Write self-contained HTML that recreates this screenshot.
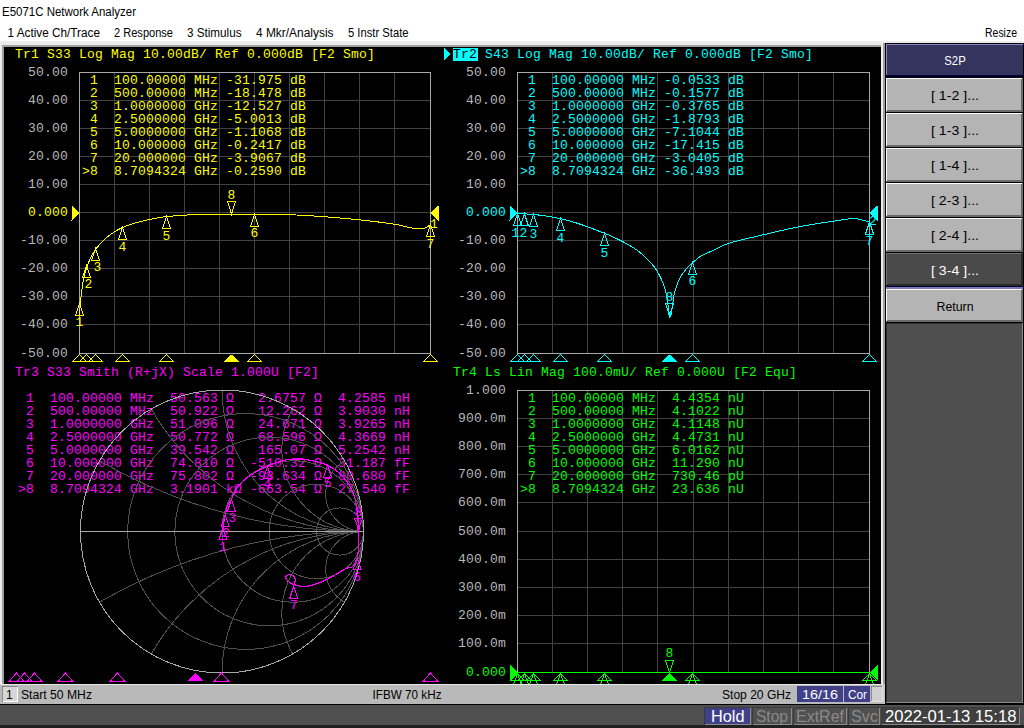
<!DOCTYPE html>
<html><head><meta charset="utf-8"><style>html,body{margin:0;padding:0;width:1024px;height:728px;overflow:hidden;background:#fff}</style></head>
<body>
<svg width="1024" height="728" viewBox="0 0 1024 728" style="position:absolute;left:0;top:0" shape-rendering="crispEdges">
<style>.m{font-family:'Liberation Mono', monospace;font-size:13.0px;letter-spacing:0.200px;white-space:pre}</style>
<rect x="0" y="0" width="1024" height="728" fill="#ffffff"/>
<text x="2" y="16" fill="#000" font-family="'Liberation Sans', sans-serif" font-size="12" textLength="134" lengthAdjust="spacingAndGlyphs" >E5071C Network Analyzer</text>
<text x="7.5" y="37" fill="#000" font-family="'Liberation Sans', sans-serif" font-size="12" textLength="92.5" lengthAdjust="spacingAndGlyphs" >1 Active Ch/Trace</text>
<text x="114" y="37" fill="#000" font-family="'Liberation Sans', sans-serif" font-size="12" textLength="59" lengthAdjust="spacingAndGlyphs" >2 Response</text>
<text x="187" y="37" fill="#000" font-family="'Liberation Sans', sans-serif" font-size="12" textLength="54.5" lengthAdjust="spacingAndGlyphs" >3 Stimulus</text>
<text x="256" y="37" fill="#000" font-family="'Liberation Sans', sans-serif" font-size="12" textLength="77.5" lengthAdjust="spacingAndGlyphs" >4 Mkr/Analysis</text>
<text x="348" y="37" fill="#000" font-family="'Liberation Sans', sans-serif" font-size="12" textLength="60.5" lengthAdjust="spacingAndGlyphs" >5 Instr State</text>
<text x="985" y="37" fill="#000" font-family="'Liberation Sans', sans-serif" font-size="12" textLength="32" lengthAdjust="spacingAndGlyphs" >Resize</text>
<rect x="0" y="41" width="1024" height="6" fill="#f0f0f0"/>
<rect x="0" y="41" width="885" height="644" fill="#ececec"/>
<rect x="2" y="45" width="881" height="640" fill="#a0a0a0"/>
<rect x="4" y="47" width="877" height="637" fill="#000000"/>
<rect x="114" y="72" width="1" height="282" fill="#424242"/>
<rect x="149" y="72" width="1" height="282" fill="#424242"/>
<rect x="184" y="72" width="1" height="282" fill="#424242"/>
<rect x="219" y="72" width="1" height="282" fill="#424242"/>
<rect x="254" y="72" width="1" height="282" fill="#424242"/>
<rect x="289" y="72" width="1" height="282" fill="#424242"/>
<rect x="324" y="72" width="1" height="282" fill="#424242"/>
<rect x="359" y="72" width="1" height="282" fill="#424242"/>
<rect x="394" y="72" width="1" height="282" fill="#424242"/>
<rect x="79" y="100" width="352" height="1" fill="#424242"/>
<rect x="79" y="128" width="352" height="1" fill="#424242"/>
<rect x="79" y="156" width="352" height="1" fill="#424242"/>
<rect x="79" y="184" width="352" height="1" fill="#424242"/>
<rect x="79" y="212" width="352" height="1" fill="#424242"/>
<rect x="79" y="240" width="352" height="1" fill="#424242"/>
<rect x="79" y="268" width="352" height="1" fill="#424242"/>
<rect x="79" y="296" width="352" height="1" fill="#424242"/>
<rect x="79" y="324" width="352" height="1" fill="#424242"/>
<rect x="79" y="72" width="352" height="1" fill="#a8a8a8"/>
<rect x="79" y="353" width="352" height="1" fill="#a8a8a8"/>
<rect x="79" y="72" width="1" height="282" fill="#a8a8a8"/>
<rect x="430" y="72" width="1" height="282" fill="#a8a8a8"/>
<rect x="552" y="72" width="1" height="282" fill="#424242"/>
<rect x="587" y="72" width="1" height="282" fill="#424242"/>
<rect x="622" y="72" width="1" height="282" fill="#424242"/>
<rect x="657" y="72" width="1" height="282" fill="#424242"/>
<rect x="693" y="72" width="1" height="282" fill="#424242"/>
<rect x="728" y="72" width="1" height="282" fill="#424242"/>
<rect x="763" y="72" width="1" height="282" fill="#424242"/>
<rect x="798" y="72" width="1" height="282" fill="#424242"/>
<rect x="833" y="72" width="1" height="282" fill="#424242"/>
<rect x="517" y="100" width="353" height="1" fill="#424242"/>
<rect x="517" y="128" width="353" height="1" fill="#424242"/>
<rect x="517" y="156" width="353" height="1" fill="#424242"/>
<rect x="517" y="184" width="353" height="1" fill="#424242"/>
<rect x="517" y="212" width="353" height="1" fill="#424242"/>
<rect x="517" y="240" width="353" height="1" fill="#424242"/>
<rect x="517" y="268" width="353" height="1" fill="#424242"/>
<rect x="517" y="296" width="353" height="1" fill="#424242"/>
<rect x="517" y="324" width="353" height="1" fill="#424242"/>
<rect x="517" y="72" width="353" height="1" fill="#a8a8a8"/>
<rect x="517" y="353" width="353" height="1" fill="#a8a8a8"/>
<rect x="517" y="72" width="1" height="282" fill="#a8a8a8"/>
<rect x="869" y="72" width="1" height="282" fill="#a8a8a8"/>
<rect x="552" y="390" width="1" height="283" fill="#424242"/>
<rect x="587" y="390" width="1" height="283" fill="#424242"/>
<rect x="622" y="390" width="1" height="283" fill="#424242"/>
<rect x="657" y="390" width="1" height="283" fill="#424242"/>
<rect x="693" y="390" width="1" height="283" fill="#424242"/>
<rect x="728" y="390" width="1" height="283" fill="#424242"/>
<rect x="763" y="390" width="1" height="283" fill="#424242"/>
<rect x="798" y="390" width="1" height="283" fill="#424242"/>
<rect x="833" y="390" width="1" height="283" fill="#424242"/>
<rect x="517" y="418" width="353" height="1" fill="#424242"/>
<rect x="517" y="446" width="353" height="1" fill="#424242"/>
<rect x="517" y="474" width="353" height="1" fill="#424242"/>
<rect x="517" y="502" width="353" height="1" fill="#424242"/>
<rect x="517" y="531" width="353" height="1" fill="#424242"/>
<rect x="517" y="559" width="353" height="1" fill="#424242"/>
<rect x="517" y="587" width="353" height="1" fill="#424242"/>
<rect x="517" y="615" width="353" height="1" fill="#424242"/>
<rect x="517" y="643" width="353" height="1" fill="#424242"/>
<rect x="517" y="390" width="353" height="1" fill="#a8a8a8"/>
<rect x="517" y="672" width="353" height="1" fill="#a8a8a8"/>
<rect x="517" y="390" width="1" height="283" fill="#a8a8a8"/>
<rect x="869" y="390" width="1" height="283" fill="#a8a8a8"/>
<text x="68" y="75.5" fill="#b8b8b8" class="m" text-anchor="end">50.00</text>
<text x="68" y="103.6" fill="#b8b8b8" class="m" text-anchor="end">40.00</text>
<text x="68" y="131.7" fill="#b8b8b8" class="m" text-anchor="end">30.00</text>
<text x="68" y="159.8" fill="#b8b8b8" class="m" text-anchor="end">20.00</text>
<text x="68" y="187.9" fill="#b8b8b8" class="m" text-anchor="end">10.00</text>
<text x="68" y="216.0" fill="#ffff00" class="m" text-anchor="end">0.000</text>
<text x="68" y="244.1" fill="#b8b8b8" class="m" text-anchor="end">-10.00</text>
<text x="68" y="272.2" fill="#b8b8b8" class="m" text-anchor="end">-20.00</text>
<text x="68" y="300.3" fill="#b8b8b8" class="m" text-anchor="end">-30.00</text>
<text x="68" y="328.4" fill="#b8b8b8" class="m" text-anchor="end">-40.00</text>
<text x="68" y="356.5" fill="#b8b8b8" class="m" text-anchor="end">-50.00</text>
<text x="506" y="75.5" fill="#b8b8b8" class="m" text-anchor="end">50.00</text>
<text x="506" y="103.6" fill="#b8b8b8" class="m" text-anchor="end">40.00</text>
<text x="506" y="131.7" fill="#b8b8b8" class="m" text-anchor="end">30.00</text>
<text x="506" y="159.8" fill="#b8b8b8" class="m" text-anchor="end">20.00</text>
<text x="506" y="187.9" fill="#b8b8b8" class="m" text-anchor="end">10.00</text>
<text x="506" y="216.0" fill="#00ffff" class="m" text-anchor="end">0.000</text>
<text x="506" y="244.1" fill="#b8b8b8" class="m" text-anchor="end">-10.00</text>
<text x="506" y="272.2" fill="#b8b8b8" class="m" text-anchor="end">-20.00</text>
<text x="506" y="300.3" fill="#b8b8b8" class="m" text-anchor="end">-30.00</text>
<text x="506" y="328.4" fill="#b8b8b8" class="m" text-anchor="end">-40.00</text>
<text x="506" y="356.5" fill="#b8b8b8" class="m" text-anchor="end">-50.00</text>
<text x="506" y="393.5" fill="#b8b8b8" class="m" text-anchor="end">1.000</text>
<text x="506" y="421.7" fill="#b8b8b8" class="m" text-anchor="end">900.0m</text>
<text x="506" y="449.9" fill="#b8b8b8" class="m" text-anchor="end">800.0m</text>
<text x="506" y="478.1" fill="#b8b8b8" class="m" text-anchor="end">700.0m</text>
<text x="506" y="506.3" fill="#b8b8b8" class="m" text-anchor="end">600.0m</text>
<text x="506" y="534.5" fill="#b8b8b8" class="m" text-anchor="end">500.0m</text>
<text x="506" y="562.7" fill="#b8b8b8" class="m" text-anchor="end">400.0m</text>
<text x="506" y="590.9" fill="#b8b8b8" class="m" text-anchor="end">300.0m</text>
<text x="506" y="619.1" fill="#b8b8b8" class="m" text-anchor="end">200.0m</text>
<text x="506" y="647.3" fill="#b8b8b8" class="m" text-anchor="end">100.0m</text>
<text x="506" y="675.5" fill="#00ff00" class="m" text-anchor="end">0.000</text>
<text x="15" y="58" fill="#ffff00" class="m" >Tr1 S33 Log Mag 10.00dB/ Ref 0.000dB [F2 Smo]</text>
<polygon points="444,48 450,54 444,60" fill="#00ffff"/>
<rect x="453" y="48" width="25" height="13" fill="#00ffff"/>
<text x="453" y="58" fill="#000" class="m" >Tr2</text>
<text x="485" y="58" fill="#00ffff" class="m" >S43 Log Mag 10.00dB/ Ref 0.000dB [F2 Smo]</text>
<text x="15" y="376" fill="#ff00ff" class="m" >Tr3 S33 Smith (R+jX) Scale 1.000U [F2]</text>
<text x="453" y="376" fill="#00ff00" class="m" >Tr4 Ls Lin Mag 100.0mU/ Ref 0.000U [F2 Equ]</text>
<text x="82" y="84" fill="#ffff00" class="m" > 1  100.00000 MHz -31.975 dB</text>
<text x="520" y="84" fill="#00ffff" class="m" > 1  100.00000 MHz -0.0533 dB</text>
<text x="18" y="402" fill="#ff00ff" class="m" > 1  100.00000 MHz  50.563 Ω   2.6757 Ω  4.2585 nH</text>
<text x="520" y="402" fill="#00ff00" class="m" > 1  100.00000 MHz  4.4354 nU</text>
<text x="82" y="97" fill="#ffff00" class="m" > 2  500.00000 MHz -18.478 dB</text>
<text x="520" y="97" fill="#00ffff" class="m" > 2  500.00000 MHz -0.1577 dB</text>
<text x="18" y="415" fill="#ff00ff" class="m" > 2  500.00000 MHz  50.922 Ω   12.262 Ω  3.9030 nH</text>
<text x="520" y="415" fill="#00ff00" class="m" > 2  500.00000 MHz  4.1022 nU</text>
<text x="82" y="110" fill="#ffff00" class="m" > 3  1.0000000 GHz -12.527 dB</text>
<text x="520" y="110" fill="#00ffff" class="m" > 3  1.0000000 GHz -0.3765 dB</text>
<text x="18" y="428" fill="#ff00ff" class="m" > 3  1.0000000 GHz  51.096 Ω   24.671 Ω  3.9265 nH</text>
<text x="520" y="428" fill="#00ff00" class="m" > 3  1.0000000 GHz  4.1148 nU</text>
<text x="82" y="123" fill="#ffff00" class="m" > 4  2.5000000 GHz -5.0013 dB</text>
<text x="520" y="123" fill="#00ffff" class="m" > 4  2.5000000 GHz -1.8793 dB</text>
<text x="18" y="441" fill="#ff00ff" class="m" > 4  2.5000000 GHz  50.772 Ω   68.596 Ω  4.3669 nH</text>
<text x="520" y="441" fill="#00ff00" class="m" > 4  2.5000000 GHz  4.4731 nU</text>
<text x="82" y="136" fill="#ffff00" class="m" > 5  5.0000000 GHz -1.1068 dB</text>
<text x="520" y="136" fill="#00ffff" class="m" > 5  5.0000000 GHz -7.1044 dB</text>
<text x="18" y="454" fill="#ff00ff" class="m" > 5  5.0000000 GHz  39.542 Ω   165.07 Ω  5.2542 nH</text>
<text x="520" y="454" fill="#00ff00" class="m" > 5  5.0000000 GHz  6.0162 nU</text>
<text x="82" y="149" fill="#ffff00" class="m" > 6  10.000000 GHz -0.2417 dB</text>
<text x="520" y="149" fill="#00ffff" class="m" > 6  10.000000 GHz -17.415 dB</text>
<text x="18" y="467" fill="#ff00ff" class="m" > 6  10.000000 GHz  74.810 Ω  -510.32 Ω  31.187 fF</text>
<text x="520" y="467" fill="#00ff00" class="m" > 6  10.000000 GHz  11.290 nU</text>
<text x="82" y="162" fill="#ffff00" class="m" > 7  20.000000 GHz -3.9067 dB</text>
<text x="520" y="162" fill="#00ffff" class="m" > 7  20.000000 GHz -3.0405 dB</text>
<text x="18" y="480" fill="#ff00ff" class="m" > 7  20.000000 GHz  75.802 Ω  -98.634 Ω  80.680 fF</text>
<text x="520" y="480" fill="#00ff00" class="m" > 7  20.000000 GHz  730.46 pU</text>
<text x="82" y="175" fill="#ffff00" class="m" >&gt;8  8.7094324 GHz -0.2590 dB</text>
<text x="520" y="175" fill="#00ffff" class="m" >&gt;8  8.7094324 GHz -36.493 dB</text>
<text x="18" y="493" fill="#ff00ff" class="m" >&gt;8  8.7094324 GHz  3.1901 kΩ -663.54 Ω  27.540 fF</text>
<text x="520" y="493" fill="#00ff00" class="m" >&gt;8  8.7094324 GHz  23.636 nU</text>
<path d="M79.50,316.06 L79.72,312.54 L79.94,309.14 L80.16,306.03 L80.38,303.37 L80.60,301.06 L80.82,298.86 L81.04,296.76 L81.25,294.77 L81.47,292.88 L81.69,291.09 L81.91,289.41 L82.13,287.82 L82.35,286.32 L82.57,284.92 L82.79,283.61 L83.01,282.39 L83.23,281.24 L83.45,280.12 L83.67,279.04 L83.89,278.00 L84.11,276.99 L84.33,276.02 L84.55,275.08 L84.77,274.17 L84.98,273.30 L85.20,272.45 L85.42,271.64 L85.64,270.85 L85.86,270.09 L86.08,269.36 L86.30,268.66 L86.52,267.97 L86.74,267.32 L86.96,266.68 L87.18,266.07 L87.40,265.48 L87.62,264.90 L87.84,264.33 L88.06,263.78 L88.28,263.23 L88.49,262.70 L88.71,262.17 L88.93,261.65 L89.15,261.15 L89.37,260.65 L89.59,260.16 L89.81,259.68 L90.03,259.20 L90.25,258.74 L90.47,258.28 L90.69,257.83 L90.91,257.39 L91.13,256.96 L91.35,256.54 L91.57,256.12 L91.78,255.71 L92.00,255.30 L92.22,254.91 L92.44,254.52 L92.66,254.14 L92.88,253.76 L93.10,253.39 L93.32,253.02 L93.54,252.66 L93.76,252.31 L93.98,251.96 L94.20,251.62 L94.42,251.28 L94.64,250.95 L94.86,250.63 L95.08,250.30 L95.30,249.99 L95.51,249.67 L95.73,249.36 L95.95,249.06 L96.17,248.76 L96.39,248.46 L96.61,248.17 L96.83,247.87 L97.05,247.59 L97.27,247.30 L97.49,247.02 L97.71,246.74 L97.93,246.46 L98.15,246.19 L98.37,245.91 L98.59,245.64 L98.80,245.38 L99.02,245.12 L99.24,244.85 L99.46,244.60 L99.68,244.34 L99.90,244.09 L100.12,243.84 L100.34,243.59 L100.56,243.35 L100.78,243.10 L101.00,242.86 L101.22,242.63 L101.44,242.39 L101.66,242.16 L101.88,241.93 L102.10,241.70 L102.31,241.48 L102.53,241.25 L102.75,241.03 L102.97,240.82 L103.19,240.60 L103.41,240.39 L103.63,240.17 L103.85,239.97 L104.07,239.76 L104.29,239.55 L104.51,239.35 L104.73,239.15 L104.95,238.95 L105.17,238.75 L105.39,238.56 L105.61,238.37 L105.82,238.18 L106.04,237.99 L106.26,237.80 L106.48,237.62 L106.70,237.43 L106.92,237.25 L107.14,237.07 L107.36,236.90 L107.58,236.72 L107.80,236.55 L108.02,236.37 L108.24,236.20 L108.46,236.04 L108.68,235.87 L108.90,235.70 L109.12,235.54 L109.33,235.37 L109.55,235.21 L109.77,235.05 L109.99,234.89 L110.21,234.73 L110.43,234.57 L110.65,234.41 L110.87,234.26 L111.09,234.10 L111.31,233.95 L111.53,233.80 L111.75,233.65 L111.97,233.50 L112.19,233.35 L112.41,233.20 L112.63,233.05 L112.84,232.91 L113.06,232.76 L113.28,232.62 L113.50,232.48 L113.72,232.33 L113.94,232.19 L114.16,232.06 L114.38,231.92 L114.60,231.78 L114.82,231.64 L115.04,231.51 L115.26,231.38 L115.48,231.24 L115.70,231.11 L115.92,230.98 L116.14,230.85 L116.36,230.73 L116.57,230.60 L116.79,230.47 L117.01,230.35 L117.23,230.23 L117.45,230.10 L117.67,229.98 L117.89,229.86 L118.11,229.74 L118.33,229.63 L118.55,229.51 L118.77,229.39 L118.99,229.28 L119.21,229.17 L119.43,229.05 L119.65,228.94 L119.87,228.83 L120.08,228.72 L120.30,228.62 L120.52,228.51 L120.74,228.40 L120.96,228.30 L121.18,228.20 L121.40,228.09 L121.62,227.99 L121.84,227.89 L122.06,227.79 L122.28,227.70 L122.50,227.60 L122.72,227.51 L122.94,227.41 L123.16,227.32 L123.38,227.22 L123.59,227.13 L123.81,227.04 L124.03,226.95 L124.25,226.85 L124.47,226.76 L124.69,226.67 L124.91,226.58 L125.13,226.50 L125.35,226.41 L125.57,226.32 L125.79,226.23 L126.01,226.15 L126.23,226.06 L126.45,225.97 L126.67,225.89 L126.88,225.81 L127.10,225.72 L127.32,225.64 L127.54,225.56 L127.76,225.47 L127.98,225.39 L128.20,225.31 L128.42,225.23 L128.64,225.15 L128.86,225.07 L129.08,224.99 L129.30,224.91 L129.52,224.84 L129.74,224.76 L129.96,224.68 L130.18,224.61 L130.40,224.53 L130.61,224.46 L130.83,224.38 L131.05,224.31 L131.27,224.23 L131.49,224.16 L131.71,224.09 L131.93,224.02 L132.15,223.94 L132.37,223.87 L132.59,223.80 L132.81,223.73 L133.03,223.66 L133.25,223.59 L133.47,223.53 L133.69,223.46 L133.91,223.39 L134.12,223.32 L134.34,223.26 L134.56,223.19 L134.78,223.13 L135.00,223.06 L135.22,223.00 L135.44,222.93 L135.66,222.87 L135.88,222.80 L136.10,222.74 L136.32,222.68 L136.54,222.62 L136.76,222.56 L136.98,222.49 L137.20,222.43 L137.41,222.37 L137.63,222.31 L137.85,222.25 L138.07,222.20 L138.29,222.14 L138.51,222.08 L138.73,222.02 L138.95,221.97 L139.17,221.91 L139.39,221.85 L139.61,221.80 L139.83,221.74 L140.05,221.69 L140.27,221.63 L140.49,221.58 L140.71,221.52 L140.92,221.47 L141.14,221.42 L141.36,221.36 L141.58,221.31 L141.80,221.25 L142.02,221.20 L142.24,221.15 L142.46,221.09 L142.68,221.04 L142.90,220.99 L143.12,220.93 L143.34,220.88 L143.56,220.83 L143.78,220.78 L144.00,220.72 L144.22,220.67 L144.44,220.62 L144.65,220.57 L144.87,220.52 L145.09,220.46 L145.31,220.41 L145.53,220.36 L145.75,220.31 L145.97,220.26 L146.19,220.21 L146.41,220.16 L146.63,220.11 L146.85,220.06 L147.07,220.01 L147.29,219.96 L147.51,219.91 L147.73,219.86 L147.94,219.81 L148.16,219.76 L148.38,219.71 L148.60,219.66 L148.82,219.61 L149.04,219.56 L149.26,219.52 L149.48,219.47 L149.70,219.42 L149.92,219.37 L150.14,219.32 L150.36,219.28 L150.58,219.23 L150.80,219.18 L151.02,219.14 L151.24,219.09 L151.45,219.05 L151.67,219.00 L151.89,218.95 L152.11,218.91 L152.33,218.86 L152.55,218.82 L152.77,218.77 L152.99,218.73 L153.21,218.69 L153.43,218.64 L153.65,218.60 L153.87,218.56 L154.09,218.51 L154.31,218.47 L154.53,218.43 L154.75,218.39 L154.97,218.34 L155.18,218.30 L155.40,218.26 L155.62,218.22 L155.84,218.18 L156.06,218.14 L156.28,218.10 L156.50,218.06 L156.72,218.02 L156.94,217.98 L157.16,217.94 L157.38,217.90 L157.60,217.87 L157.82,217.83 L158.04,217.79 L158.26,217.75 L158.47,217.72 L158.69,217.68 L158.91,217.64 L159.13,217.61 L159.35,217.57 L159.57,217.54 L159.79,217.50 L160.01,217.47 L160.23,217.43 L160.45,217.40 L160.67,217.37 L160.89,217.33 L161.11,217.30 L161.33,217.27 L161.55,217.24 L161.77,217.20 L161.99,217.17 L162.20,217.14 L162.42,217.11 L162.64,217.08 L162.86,217.05 L163.08,217.02 L163.30,216.99 L163.52,216.97 L163.74,216.94 L163.96,216.91 L164.18,216.88 L164.40,216.86 L164.62,216.83 L164.84,216.80 L165.06,216.78 L165.28,216.75 L165.50,216.73 L165.71,216.70 L165.93,216.68 L166.15,216.66 L166.37,216.63 L166.59,216.61 L166.81,216.59 L167.03,216.57 L167.25,216.54 L167.47,216.52 L167.69,216.50 L167.91,216.48 L168.13,216.45 L168.35,216.43 L168.57,216.41 L168.79,216.39 L169.00,216.37 L169.22,216.35 L169.44,216.32 L169.66,216.30 L169.88,216.28 L170.10,216.26 L170.32,216.24 L170.54,216.22 L170.76,216.20 L170.98,216.18 L171.20,216.16 L171.42,216.13 L171.64,216.11 L171.86,216.09 L172.08,216.07 L172.30,216.05 L172.51,216.03 L172.73,216.01 L172.95,215.99 L173.17,215.97 L173.39,215.95 L173.61,215.93 L173.83,215.91 L174.05,215.89 L174.27,215.88 L174.49,215.86 L174.71,215.84 L174.93,215.82 L175.15,215.80 L175.37,215.78 L175.59,215.76 L175.81,215.74 L176.02,215.72 L176.24,215.71 L176.46,215.69 L176.68,215.67 L176.90,215.65 L177.12,215.63 L177.34,215.62 L177.56,215.60 L177.78,215.58 L178.00,215.56 L178.22,215.55 L178.44,215.53 L178.66,215.51 L178.88,215.50 L179.10,215.48 L179.32,215.46 L179.53,215.45 L179.75,215.43 L179.97,215.42 L180.19,215.40 L180.41,215.38 L180.63,215.37 L180.85,215.35 L181.07,215.34 L181.29,215.32 L181.51,215.31 L181.73,215.29 L181.95,215.28 L182.17,215.26 L182.39,215.25 L182.61,215.23 L182.83,215.22 L183.05,215.21 L183.26,215.19 L183.48,215.18 L183.70,215.17 L183.92,215.15 L184.14,215.14 L184.36,215.13 L184.58,215.11 L184.80,215.10 L185.02,215.09 L185.24,215.08 L185.46,215.06 L185.68,215.05 L185.90,215.04 L186.12,215.03 L186.34,215.02 L186.56,215.01 L186.77,215.00 L186.99,214.99 L187.21,214.97 L187.43,214.96 L187.65,214.95 L187.87,214.94 L188.09,214.93 L188.31,214.92 L188.53,214.91 L188.75,214.91 L188.97,214.90 L189.19,214.89 L189.41,214.88 L189.63,214.87 L189.85,214.86 L190.06,214.85 L190.28,214.85 L190.50,214.84 L190.72,214.83 L190.94,214.82 L191.16,214.82 L191.38,214.81 L191.60,214.80 L191.82,214.80 L192.04,214.79 L192.26,214.78 L192.48,214.78 L192.70,214.77 L192.92,214.77 L193.14,214.76 L193.36,214.76 L193.57,214.75 L193.79,214.75 L194.01,214.74 L194.23,214.73 L194.45,214.73 L194.67,214.72 L194.89,214.72 L195.11,214.71 L195.33,214.71 L195.55,214.70 L195.77,214.70 L195.99,214.69 L196.21,214.69 L196.43,214.68 L196.65,214.68 L196.87,214.67 L197.08,214.67 L197.30,214.67 L197.52,214.66 L197.74,214.66 L197.96,214.65 L198.18,214.65 L198.40,214.64 L198.62,214.64 L198.84,214.63 L199.06,214.63 L199.28,214.62 L199.50,214.62 L199.72,214.61 L199.94,214.61 L200.16,214.61 L200.38,214.60 L200.59,214.60 L200.81,214.59 L201.03,214.59 L201.25,214.58 L201.47,214.58 L201.69,214.57 L201.91,214.57 L202.13,214.57 L202.35,214.56 L202.57,214.56 L202.79,214.55 L203.01,214.55 L203.23,214.55 L203.45,214.54 L203.67,214.54 L203.89,214.53 L204.10,214.53 L204.32,214.53 L204.54,214.52 L204.76,214.52 L204.98,214.51 L205.20,214.51 L205.42,214.51 L205.64,214.50 L205.86,214.50 L206.08,214.49 L206.30,214.49 L206.52,214.49 L206.74,214.48 L206.96,214.48 L207.18,214.48 L207.40,214.47 L207.62,214.47 L207.83,214.46 L208.05,214.46 L208.27,214.46 L208.49,214.45 L208.71,214.45 L208.93,214.45 L209.15,214.44 L209.37,214.44 L209.59,214.44 L209.81,214.43 L210.03,214.43 L210.25,214.43 L210.47,214.42 L210.69,214.42 L210.91,214.42 L211.12,214.41 L211.34,214.41 L211.56,214.41 L211.78,214.40 L212.00,214.40 L212.22,214.40 L212.44,214.40 L212.66,214.39 L212.88,214.39 L213.10,214.39 L213.32,214.38 L213.54,214.38 L213.76,214.38 L213.98,214.38 L214.20,214.37 L214.42,214.37 L214.63,214.37 L214.85,214.36 L215.07,214.36 L215.29,214.36 L215.51,214.36 L215.73,214.35 L215.95,214.35 L216.17,214.35 L216.39,214.35 L216.61,214.34 L216.83,214.34 L217.05,214.34 L217.27,214.34 L217.49,214.33 L217.71,214.33 L217.93,214.33 L218.14,214.33 L218.36,214.32 L218.58,214.32 L218.80,214.32 L219.02,214.32 L219.24,214.31 L219.46,214.31 L219.68,214.31 L219.90,214.31 L220.12,214.31 L220.34,214.30 L220.56,214.30 L220.78,214.30 L221.00,214.30 L221.22,214.29 L221.44,214.29 L221.66,214.29 L221.87,214.29 L222.09,214.29 L222.31,214.29 L222.53,214.28 L222.75,214.28 L222.97,214.28 L223.19,214.28 L223.41,214.28 L223.63,214.27 L223.85,214.27 L224.07,214.27 L224.29,214.27 L224.51,214.27 L224.73,214.27 L224.95,214.26 L225.16,214.26 L225.38,214.26 L225.60,214.26 L225.82,214.26 L226.04,214.26 L226.26,214.26 L226.48,214.25 L226.70,214.25 L226.92,214.25 L227.14,214.25 L227.36,214.25 L227.58,214.25 L227.80,214.25 L228.02,214.25 L228.24,214.24 L228.46,214.24 L228.67,214.24 L228.89,214.24 L229.11,214.24 L229.33,214.24 L229.55,214.24 L229.77,214.24 L229.99,214.24 L230.21,214.23 L230.43,214.23 L230.65,214.23 L230.87,214.23 L231.09,214.23 L231.31,214.23 L231.53,214.23 L231.75,214.23 L231.97,214.23 L232.18,214.23 L232.40,214.23 L232.62,214.23 L232.84,214.22 L233.06,214.22 L233.28,214.22 L233.50,214.22 L233.72,214.22 L233.94,214.22 L234.16,214.22 L234.38,214.22 L234.60,214.22 L234.82,214.22 L235.04,214.22 L235.26,214.22 L235.48,214.22 L235.69,214.21 L235.91,214.21 L236.13,214.21 L236.35,214.21 L236.57,214.21 L236.79,214.21 L237.01,214.21 L237.23,214.21 L237.45,214.21 L237.67,214.21 L237.89,214.21 L238.11,214.21 L238.33,214.21 L238.55,214.21 L238.77,214.21 L238.99,214.20 L239.20,214.20 L239.42,214.20 L239.64,214.20 L239.86,214.20 L240.08,214.20 L240.30,214.20 L240.52,214.20 L240.74,214.20 L240.96,214.20 L241.18,214.20 L241.40,214.20 L241.62,214.20 L241.84,214.20 L242.06,214.20 L242.28,214.20 L242.50,214.20 L242.72,214.19 L242.93,214.19 L243.15,214.19 L243.37,214.19 L243.59,214.19 L243.81,214.19 L244.03,214.19 L244.25,214.19 L244.47,214.19 L244.69,214.19 L244.91,214.19 L245.13,214.19 L245.35,214.19 L245.57,214.19 L245.79,214.19 L246.01,214.19 L246.22,214.19 L246.44,214.19 L246.66,214.19 L246.88,214.19 L247.10,214.19 L247.32,214.19 L247.54,214.19 L247.76,214.18 L247.98,214.18 L248.20,214.18 L248.42,214.18 L248.64,214.18 L248.86,214.18 L249.08,214.18 L249.30,214.18 L249.52,214.18 L249.73,214.18 L249.95,214.18 L250.17,214.18 L250.39,214.18 L250.61,214.18 L250.83,214.18 L251.05,214.18 L251.27,214.18 L251.49,214.18 L251.71,214.18 L251.93,214.18 L252.15,214.18 L252.37,214.18 L252.59,214.18 L252.81,214.18 L253.03,214.18 L253.25,214.18 L253.46,214.18 L253.68,214.18 L253.90,214.18 L254.12,214.18 L254.34,214.18 L254.56,214.18 L254.78,214.18 L255.00,214.18 L255.22,214.18 L255.44,214.18 L255.66,214.18 L255.88,214.18 L256.10,214.18 L256.32,214.18 L256.54,214.18 L256.75,214.18 L256.97,214.18 L257.19,214.18 L257.41,214.18 L257.63,214.19 L257.85,214.19 L258.07,214.19 L258.29,214.19 L258.51,214.19 L258.73,214.19 L258.95,214.19 L259.17,214.19 L259.39,214.19 L259.61,214.20 L259.83,214.20 L260.05,214.20 L260.26,214.20 L260.48,214.20 L260.70,214.20 L260.92,214.21 L261.14,214.21 L261.36,214.21 L261.58,214.21 L261.80,214.21 L262.02,214.21 L262.24,214.22 L262.46,214.22 L262.68,214.22 L262.90,214.22 L263.12,214.23 L263.34,214.23 L263.56,214.23 L263.77,214.23 L263.99,214.24 L264.21,214.24 L264.43,214.24 L264.65,214.24 L264.87,214.25 L265.09,214.25 L265.31,214.25 L265.53,214.25 L265.75,214.26 L265.97,214.26 L266.19,214.26 L266.41,214.27 L266.63,214.27 L266.85,214.27 L267.07,214.27 L267.28,214.28 L267.50,214.28 L267.72,214.28 L267.94,214.29 L268.16,214.29 L268.38,214.29 L268.60,214.30 L268.82,214.30 L269.04,214.30 L269.26,214.31 L269.48,214.31 L269.70,214.32 L269.92,214.32 L270.14,214.32 L270.36,214.33 L270.58,214.33 L270.80,214.33 L271.01,214.34 L271.23,214.34 L271.45,214.35 L271.67,214.35 L271.89,214.35 L272.11,214.36 L272.33,214.36 L272.55,214.37 L272.77,214.37 L272.99,214.37 L273.21,214.38 L273.43,214.38 L273.65,214.39 L273.87,214.39 L274.09,214.40 L274.30,214.40 L274.52,214.40 L274.74,214.41 L274.96,214.41 L275.18,214.42 L275.40,214.42 L275.62,214.43 L275.84,214.43 L276.06,214.44 L276.28,214.44 L276.50,214.45 L276.72,214.45 L276.94,214.45 L277.16,214.46 L277.38,214.46 L277.60,214.47 L277.81,214.47 L278.03,214.48 L278.25,214.48 L278.47,214.49 L278.69,214.49 L278.91,214.50 L279.13,214.50 L279.35,214.51 L279.57,214.51 L279.79,214.52 L280.01,214.52 L280.23,214.53 L280.45,214.53 L280.67,214.54 L280.89,214.54 L281.11,214.55 L281.32,214.55 L281.54,214.56 L281.76,214.56 L281.98,214.57 L282.20,214.58 L282.42,214.58 L282.64,214.59 L282.86,214.59 L283.08,214.60 L283.30,214.60 L283.52,214.61 L283.74,214.61 L283.96,214.62 L284.18,214.62 L284.40,214.63 L284.62,214.63 L284.83,214.64 L285.05,214.65 L285.27,214.65 L285.49,214.66 L285.71,214.66 L285.93,214.67 L286.15,214.67 L286.37,214.68 L286.59,214.68 L286.81,214.69 L287.03,214.69 L287.25,214.70 L287.47,214.71 L287.69,214.71 L287.91,214.72 L288.13,214.72 L288.35,214.73 L288.56,214.73 L288.78,214.74 L289.00,214.75 L289.22,214.75 L289.44,214.76 L289.66,214.76 L289.88,214.77 L290.10,214.77 L290.32,214.78 L290.54,214.79 L290.76,214.79 L290.98,214.80 L291.20,214.80 L291.42,214.81 L291.64,214.82 L291.86,214.83 L292.07,214.83 L292.29,214.84 L292.51,214.85 L292.73,214.85 L292.95,214.86 L293.17,214.87 L293.39,214.88 L293.61,214.88 L293.83,214.89 L294.05,214.90 L294.27,214.91 L294.49,214.92 L294.71,214.93 L294.93,214.93 L295.15,214.94 L295.37,214.95 L295.58,214.96 L295.80,214.97 L296.02,214.98 L296.24,214.99 L296.46,215.00 L296.68,215.01 L296.90,215.02 L297.12,215.03 L297.34,215.04 L297.56,215.05 L297.78,215.06 L298.00,215.07 L298.22,215.08 L298.44,215.09 L298.66,215.10 L298.88,215.11 L299.09,215.12 L299.31,215.13 L299.53,215.14 L299.75,215.15 L299.97,215.16 L300.19,215.17 L300.41,215.18 L300.63,215.20 L300.85,215.21 L301.07,215.22 L301.29,215.23 L301.51,215.24 L301.73,215.25 L301.95,215.27 L302.17,215.28 L302.38,215.29 L302.60,215.30 L302.82,215.31 L303.04,215.33 L303.26,215.34 L303.48,215.35 L303.70,215.36 L303.92,215.38 L304.14,215.39 L304.36,215.40 L304.58,215.41 L304.80,215.43 L305.02,215.44 L305.24,215.45 L305.46,215.47 L305.68,215.48 L305.89,215.49 L306.11,215.51 L306.33,215.52 L306.55,215.53 L306.77,215.55 L306.99,215.56 L307.21,215.57 L307.43,215.59 L307.65,215.60 L307.87,215.61 L308.09,215.63 L308.31,215.64 L308.53,215.66 L308.75,215.67 L308.97,215.68 L309.19,215.70 L309.40,215.71 L309.62,215.73 L309.84,215.74 L310.06,215.75 L310.28,215.77 L310.50,215.78 L310.72,215.80 L310.94,215.81 L311.16,215.83 L311.38,215.84 L311.60,215.86 L311.82,215.87 L312.04,215.89 L312.26,215.90 L312.48,215.91 L312.70,215.93 L312.91,215.94 L313.13,215.96 L313.35,215.97 L313.57,215.99 L313.79,216.00 L314.01,216.02 L314.23,216.03 L314.45,216.05 L314.67,216.06 L314.89,216.08 L315.11,216.09 L315.33,216.11 L315.55,216.13 L315.77,216.14 L315.99,216.16 L316.21,216.17 L316.42,216.19 L316.64,216.20 L316.86,216.22 L317.08,216.23 L317.30,216.25 L317.52,216.26 L317.74,216.28 L317.96,216.29 L318.18,216.31 L318.40,216.33 L318.62,216.34 L318.84,216.36 L319.06,216.37 L319.28,216.39 L319.50,216.40 L319.72,216.42 L319.94,216.43 L320.15,216.45 L320.37,216.47 L320.59,216.48 L320.81,216.50 L321.03,216.51 L321.25,216.53 L321.47,216.54 L321.69,216.56 L321.91,216.57 L322.13,216.59 L322.35,216.61 L322.57,216.62 L322.79,216.64 L323.01,216.65 L323.23,216.67 L323.44,216.68 L323.66,216.70 L323.88,216.71 L324.10,216.73 L324.32,216.74 L324.54,216.76 L324.76,216.78 L324.98,216.79 L325.20,216.81 L325.42,216.82 L325.64,216.84 L325.86,216.85 L326.08,216.87 L326.30,216.88 L326.52,216.90 L326.74,216.92 L326.95,216.93 L327.17,216.95 L327.39,216.96 L327.61,216.98 L327.83,217.00 L328.05,217.01 L328.27,217.03 L328.49,217.05 L328.71,217.06 L328.93,217.08 L329.15,217.10 L329.37,217.11 L329.59,217.13 L329.81,217.15 L330.03,217.16 L330.25,217.18 L330.46,217.20 L330.68,217.22 L330.90,217.23 L331.12,217.25 L331.34,217.27 L331.56,217.28 L331.78,217.30 L332.00,217.32 L332.22,217.34 L332.44,217.35 L332.66,217.37 L332.88,217.39 L333.10,217.41 L333.32,217.43 L333.54,217.44 L333.76,217.46 L333.98,217.48 L334.19,217.50 L334.41,217.52 L334.63,217.53 L334.85,217.55 L335.07,217.57 L335.29,217.59 L335.51,217.61 L335.73,217.63 L335.95,217.64 L336.17,217.66 L336.39,217.68 L336.61,217.70 L336.83,217.72 L337.05,217.74 L337.27,217.76 L337.48,217.78 L337.70,217.80 L337.92,217.81 L338.14,217.83 L338.36,217.85 L338.58,217.87 L338.80,217.89 L339.02,217.91 L339.24,217.93 L339.46,217.95 L339.68,217.97 L339.90,217.99 L340.12,218.01 L340.34,218.03 L340.56,218.05 L340.78,218.07 L341.00,218.09 L341.21,218.11 L341.43,218.13 L341.65,218.15 L341.87,218.17 L342.09,218.19 L342.31,218.21 L342.53,218.23 L342.75,218.25 L342.97,218.27 L343.19,218.29 L343.41,218.31 L343.63,218.33 L343.85,218.35 L344.07,218.37 L344.29,218.39 L344.50,218.41 L344.72,218.43 L344.94,218.45 L345.16,218.47 L345.38,218.49 L345.60,218.51 L345.82,218.53 L346.04,218.55 L346.26,218.58 L346.48,218.60 L346.70,218.62 L346.92,218.64 L347.14,218.66 L347.36,218.68 L347.58,218.70 L347.80,218.72 L348.01,218.74 L348.23,218.76 L348.45,218.79 L348.67,218.81 L348.89,218.83 L349.11,218.85 L349.33,218.87 L349.55,218.89 L349.77,218.91 L349.99,218.94 L350.21,218.96 L350.43,218.98 L350.65,219.00 L350.87,219.02 L351.09,219.04 L351.31,219.07 L351.52,219.09 L351.74,219.11 L351.96,219.13 L352.18,219.15 L352.40,219.17 L352.62,219.20 L352.84,219.22 L353.06,219.24 L353.28,219.26 L353.50,219.28 L353.72,219.31 L353.94,219.33 L354.16,219.35 L354.38,219.37 L354.60,219.40 L354.82,219.42 L355.04,219.44 L355.25,219.46 L355.47,219.48 L355.69,219.51 L355.91,219.53 L356.13,219.55 L356.35,219.57 L356.57,219.60 L356.79,219.62 L357.01,219.64 L357.23,219.66 L357.45,219.69 L357.67,219.71 L357.89,219.73 L358.11,219.75 L358.33,219.78 L358.54,219.80 L358.76,219.82 L358.98,219.84 L359.20,219.87 L359.42,219.89 L359.64,219.91 L359.86,219.94 L360.08,219.96 L360.30,219.98 L360.52,220.00 L360.74,220.03 L360.96,220.05 L361.18,220.07 L361.40,220.10 L361.62,220.12 L361.84,220.14 L362.05,220.16 L362.27,220.19 L362.49,220.21 L362.71,220.23 L362.93,220.26 L363.15,220.28 L363.37,220.30 L363.59,220.33 L363.81,220.35 L364.03,220.37 L364.25,220.40 L364.47,220.42 L364.69,220.44 L364.91,220.47 L365.13,220.49 L365.35,220.51 L365.56,220.54 L365.78,220.56 L366.00,220.58 L366.22,220.61 L366.44,220.63 L366.66,220.66 L366.88,220.68 L367.10,220.70 L367.32,220.73 L367.54,220.75 L367.76,220.77 L367.98,220.80 L368.20,220.82 L368.42,220.85 L368.64,220.87 L368.86,220.89 L369.07,220.92 L369.29,220.94 L369.51,220.97 L369.73,220.99 L369.95,221.02 L370.17,221.04 L370.39,221.07 L370.61,221.09 L370.83,221.11 L371.05,221.14 L371.27,221.16 L371.49,221.19 L371.71,221.21 L371.93,221.24 L372.15,221.26 L372.37,221.29 L372.58,221.31 L372.80,221.34 L373.02,221.36 L373.24,221.39 L373.46,221.41 L373.68,221.44 L373.90,221.46 L374.12,221.49 L374.34,221.51 L374.56,221.54 L374.78,221.56 L375.00,221.59 L375.22,221.62 L375.44,221.64 L375.66,221.67 L375.88,221.69 L376.09,221.72 L376.31,221.74 L376.53,221.77 L376.75,221.80 L376.97,221.82 L377.19,221.85 L377.41,221.88 L377.63,221.90 L377.85,221.93 L378.07,221.95 L378.29,221.98 L378.51,222.01 L378.73,222.03 L378.95,222.06 L379.17,222.09 L379.39,222.11 L379.61,222.14 L379.82,222.17 L380.04,222.20 L380.26,222.22 L380.48,222.25 L380.70,222.28 L380.92,222.30 L381.14,222.33 L381.36,222.36 L381.58,222.39 L381.80,222.42 L382.02,222.44 L382.24,222.47 L382.46,222.50 L382.68,222.53 L382.90,222.55 L383.12,222.58 L383.33,222.61 L383.55,222.64 L383.77,222.67 L383.99,222.70 L384.21,222.72 L384.43,222.75 L384.65,222.78 L384.87,222.81 L385.09,222.84 L385.31,222.87 L385.53,222.90 L385.75,222.93 L385.97,222.96 L386.19,222.99 L386.41,223.02 L386.62,223.04 L386.84,223.07 L387.06,223.10 L387.28,223.13 L387.50,223.16 L387.72,223.19 L387.94,223.22 L388.16,223.25 L388.38,223.28 L388.60,223.31 L388.82,223.34 L389.04,223.38 L389.26,223.41 L389.48,223.44 L389.70,223.47 L389.92,223.50 L390.13,223.53 L390.35,223.56 L390.57,223.59 L390.79,223.62 L391.01,223.65 L391.23,223.69 L391.45,223.72 L391.67,223.75 L391.89,223.78 L392.11,223.81 L392.33,223.84 L392.55,223.88 L392.77,223.91 L392.99,223.94 L393.21,223.97 L393.43,224.01 L393.64,224.04 L393.86,224.07 L394.08,224.10 L394.30,224.14 L394.52,224.17 L394.74,224.20 L394.96,224.24 L395.18,224.27 L395.40,224.30 L395.62,224.34 L395.84,224.37 L396.06,224.41 L396.28,224.45 L396.50,224.49 L396.72,224.53 L396.94,224.57 L397.15,224.61 L397.37,224.65 L397.59,224.70 L397.81,224.74 L398.03,224.79 L398.25,224.83 L398.47,224.88 L398.69,224.93 L398.91,224.98 L399.13,225.03 L399.35,225.08 L399.57,225.13 L399.79,225.18 L400.01,225.23 L400.23,225.28 L400.45,225.34 L400.66,225.39 L400.88,225.44 L401.10,225.50 L401.32,225.55 L401.54,225.61 L401.76,225.66 L401.98,225.72 L402.20,225.77 L402.42,225.83 L402.64,225.89 L402.86,225.94 L403.08,226.00 L403.30,226.06 L403.52,226.11 L403.74,226.17 L403.96,226.23 L404.18,226.29 L404.39,226.34 L404.61,226.40 L404.83,226.46 L405.05,226.51 L405.27,226.57 L405.49,226.62 L405.71,226.68 L405.93,226.74 L406.15,226.79 L406.37,226.85 L406.59,226.90 L406.81,226.96 L407.03,227.01 L407.25,227.06 L407.47,227.12 L407.69,227.17 L407.90,227.22 L408.12,227.27 L408.34,227.32 L408.56,227.38 L408.78,227.42 L409.00,227.47 L409.22,227.52 L409.44,227.57 L409.66,227.62 L409.88,227.66 L410.10,227.71 L410.32,227.75 L410.54,227.80 L410.76,227.84 L410.98,227.88 L411.19,227.92 L411.41,227.96 L411.63,228.00 L411.85,228.04 L412.07,228.07 L412.29,228.11 L412.51,228.14 L412.73,228.17 L412.95,228.21 L413.17,228.24 L413.39,228.27 L413.61,228.29 L413.83,228.32 L414.05,228.34 L414.27,228.37 L414.49,228.39 L414.70,228.41 L414.92,228.43 L415.14,228.45 L415.36,228.46 L415.58,228.48 L415.80,228.49 L416.02,228.50 L416.24,228.51 L416.46,228.52 L416.68,228.53 L416.90,228.53 L417.12,228.53 L417.34,228.53 L417.56,228.53 L417.78,228.53 L418.00,228.53 L418.21,228.53 L418.43,228.53 L418.65,228.53 L418.87,228.52 L419.09,228.52 L419.31,228.52 L419.53,228.51 L419.75,228.51 L419.97,228.51 L420.19,228.50 L420.41,228.50 L420.63,228.49 L420.85,228.48 L421.07,228.48 L421.29,228.47 L421.51,228.47 L421.72,228.46 L421.94,228.45 L422.16,228.44 L422.38,228.44 L422.60,228.43 L422.82,228.42 L423.04,228.41 L423.26,228.40 L423.48,228.39 L423.70,228.38 L423.92,228.35 L424.14,228.32 L424.36,228.27 L424.58,228.22 L424.80,228.16 L425.02,228.09 L425.24,228.01 L425.45,227.93 L425.67,227.83 L425.89,227.73 L426.11,227.62 L426.33,227.51 L426.55,227.39 L426.77,227.26 L426.99,227.13 L427.21,226.99 L427.43,226.85 L427.65,226.70 L427.87,226.55 L428.09,226.40 L428.31,226.24 L428.53,226.07 L428.75,225.90 L428.96,225.73 L429.18,225.56 L429.40,225.38 L429.62,225.21 L429.84,225.03 L430.06,224.84 L430.28,224.66 L430.50,224.48" fill="none" stroke="#ffff00" stroke-width="1" shape-rendering="crispEdges"/>
<path d="M517.50,213.58 L517.72,213.60 L517.94,213.62 L518.16,213.64 L518.38,213.65 L518.60,213.66 L518.82,213.67 L519.04,213.69 L519.26,213.70 L519.48,213.71 L519.70,213.72 L519.92,213.73 L520.14,213.74 L520.36,213.74 L520.58,213.75 L520.80,213.76 L521.02,213.77 L521.24,213.78 L521.46,213.79 L521.68,213.79 L521.90,213.80 L522.12,213.81 L522.34,213.82 L522.56,213.82 L522.78,213.83 L523.00,213.84 L523.22,213.85 L523.44,213.86 L523.66,213.86 L523.88,213.87 L524.10,213.88 L524.32,213.89 L524.54,213.90 L524.76,213.91 L524.98,213.92 L525.20,213.93 L525.42,213.94 L525.64,213.95 L525.86,213.97 L526.08,213.98 L526.30,213.99 L526.52,214.00 L526.74,214.01 L526.96,214.03 L527.18,214.04 L527.40,214.05 L527.62,214.06 L527.84,214.08 L528.06,214.09 L528.28,214.10 L528.50,214.12 L528.72,214.13 L528.94,214.15 L529.16,214.16 L529.38,214.18 L529.60,214.19 L529.82,214.20 L530.04,214.22 L530.26,214.24 L530.48,214.25 L530.70,214.27 L530.92,214.28 L531.14,214.30 L531.36,214.32 L531.58,214.33 L531.80,214.35 L532.02,214.37 L532.24,214.38 L532.46,214.40 L532.68,214.42 L532.90,214.44 L533.12,214.46 L533.34,214.48 L533.56,214.50 L533.78,214.51 L534.00,214.53 L534.22,214.55 L534.44,214.57 L534.66,214.59 L534.88,214.62 L535.10,214.64 L535.32,214.66 L535.54,214.68 L535.76,214.70 L535.98,214.72 L536.20,214.75 L536.42,214.77 L536.64,214.79 L536.86,214.82 L537.08,214.84 L537.30,214.86 L537.52,214.89 L537.74,214.91 L537.96,214.94 L538.18,214.96 L538.40,214.99 L538.62,215.02 L538.84,215.04 L539.06,215.07 L539.28,215.09 L539.50,215.12 L539.72,215.15 L539.94,215.18 L540.16,215.20 L540.38,215.23 L540.60,215.26 L540.82,215.29 L541.04,215.32 L541.26,215.35 L541.48,215.38 L541.70,215.41 L541.92,215.44 L542.14,215.47 L542.36,215.50 L542.58,215.53 L542.80,215.56 L543.02,215.59 L543.24,215.62 L543.46,215.65 L543.68,215.69 L543.90,215.72 L544.12,215.75 L544.34,215.78 L544.56,215.82 L544.78,215.85 L545.00,215.88 L545.22,215.92 L545.44,215.95 L545.66,215.98 L545.88,216.02 L546.10,216.05 L546.32,216.09 L546.54,216.12 L546.76,216.16 L546.98,216.19 L547.20,216.23 L547.42,216.27 L547.64,216.30 L547.86,216.34 L548.08,216.37 L548.30,216.41 L548.52,216.45 L548.74,216.49 L548.96,216.52 L549.18,216.56 L549.40,216.60 L549.62,216.64 L549.84,216.67 L550.06,216.71 L550.28,216.75 L550.50,216.79 L550.72,216.83 L550.94,216.87 L551.16,216.91 L551.38,216.95 L551.60,216.99 L551.82,217.03 L552.04,217.07 L552.26,217.11 L552.48,217.15 L552.70,217.19 L552.92,217.23 L553.14,217.27 L553.36,217.31 L553.58,217.35 L553.80,217.39 L554.02,217.44 L554.24,217.48 L554.46,217.52 L554.68,217.56 L554.90,217.61 L555.12,217.65 L555.34,217.69 L555.56,217.73 L555.78,217.78 L556.00,217.82 L556.22,217.86 L556.44,217.91 L556.66,217.95 L556.88,217.99 L557.10,218.04 L557.32,218.08 L557.54,218.13 L557.76,218.17 L557.98,218.21 L558.20,218.26 L558.42,218.30 L558.64,218.35 L558.86,218.39 L559.08,218.44 L559.30,218.48 L559.52,218.53 L559.74,218.57 L559.96,218.62 L560.18,218.67 L560.40,218.71 L560.62,218.76 L560.84,218.80 L561.06,218.85 L561.28,218.90 L561.50,218.95 L561.72,218.99 L561.94,219.04 L562.16,219.09 L562.38,219.14 L562.60,219.19 L562.82,219.24 L563.04,219.29 L563.26,219.34 L563.48,219.39 L563.70,219.44 L563.92,219.49 L564.14,219.54 L564.36,219.60 L564.58,219.65 L564.80,219.70 L565.02,219.75 L565.24,219.81 L565.46,219.86 L565.68,219.92 L565.90,219.97 L566.12,220.03 L566.34,220.08 L566.56,220.14 L566.78,220.20 L567.00,220.25 L567.22,220.31 L567.44,220.37 L567.66,220.42 L567.88,220.48 L568.10,220.54 L568.32,220.60 L568.54,220.66 L568.76,220.72 L568.98,220.78 L569.20,220.84 L569.42,220.90 L569.64,220.96 L569.86,221.02 L570.08,221.08 L570.30,221.14 L570.52,221.20 L570.74,221.27 L570.96,221.33 L571.18,221.39 L571.40,221.46 L571.62,221.52 L571.84,221.58 L572.06,221.65 L572.28,221.71 L572.50,221.78 L572.72,221.84 L572.94,221.91 L573.16,221.97 L573.38,222.04 L573.60,222.11 L573.82,222.17 L574.04,222.24 L574.26,222.31 L574.48,222.37 L574.70,222.44 L574.92,222.51 L575.14,222.58 L575.36,222.65 L575.58,222.71 L575.80,222.78 L576.02,222.85 L576.24,222.92 L576.46,222.99 L576.68,223.06 L576.90,223.13 L577.12,223.20 L577.34,223.27 L577.56,223.34 L577.78,223.42 L578.00,223.49 L578.22,223.56 L578.44,223.63 L578.66,223.70 L578.88,223.78 L579.10,223.85 L579.32,223.92 L579.54,224.00 L579.76,224.07 L579.98,224.14 L580.20,224.22 L580.42,224.29 L580.64,224.37 L580.86,224.44 L581.08,224.51 L581.30,224.59 L581.52,224.67 L581.74,224.74 L581.96,224.82 L582.18,224.89 L582.40,224.97 L582.62,225.04 L582.84,225.12 L583.06,225.20 L583.28,225.28 L583.50,225.35 L583.72,225.43 L583.94,225.51 L584.16,225.59 L584.38,225.66 L584.60,225.74 L584.82,225.82 L585.04,225.90 L585.26,225.98 L585.48,226.06 L585.70,226.13 L585.92,226.21 L586.14,226.29 L586.36,226.37 L586.58,226.45 L586.80,226.53 L587.02,226.61 L587.24,226.69 L587.46,226.77 L587.68,226.85 L587.90,226.93 L588.12,227.02 L588.34,227.10 L588.56,227.18 L588.78,227.26 L589.00,227.34 L589.22,227.42 L589.44,227.50 L589.66,227.59 L589.88,227.67 L590.10,227.75 L590.32,227.83 L590.54,227.91 L590.76,228.00 L590.98,228.08 L591.20,228.16 L591.42,228.25 L591.64,228.33 L591.86,228.41 L592.08,228.50 L592.30,228.58 L592.52,228.66 L592.74,228.75 L592.96,228.83 L593.18,228.91 L593.40,229.00 L593.62,229.08 L593.84,229.17 L594.06,229.25 L594.28,229.33 L594.50,229.42 L594.72,229.50 L594.94,229.59 L595.16,229.67 L595.38,229.76 L595.60,229.84 L595.82,229.93 L596.04,230.01 L596.26,230.10 L596.48,230.18 L596.70,230.27 L596.92,230.35 L597.14,230.44 L597.36,230.53 L597.58,230.61 L597.80,230.70 L598.02,230.78 L598.24,230.87 L598.46,230.95 L598.68,231.04 L598.90,231.13 L599.12,231.21 L599.34,231.30 L599.56,231.39 L599.78,231.47 L600.00,231.56 L600.22,231.64 L600.44,231.73 L600.66,231.82 L600.88,231.90 L601.10,231.99 L601.32,232.08 L601.54,232.16 L601.76,232.25 L601.98,232.34 L602.20,232.42 L602.42,232.51 L602.64,232.60 L602.86,232.68 L603.08,232.77 L603.30,232.86 L603.52,232.94 L603.74,233.03 L603.96,233.12 L604.18,233.20 L604.40,233.29 L604.62,233.38 L604.84,233.46 L605.06,233.55 L605.28,233.64 L605.50,233.73 L605.72,233.81 L605.94,233.90 L606.16,233.99 L606.38,234.08 L606.60,234.17 L606.82,234.26 L607.04,234.35 L607.26,234.44 L607.48,234.53 L607.70,234.62 L607.92,234.71 L608.14,234.81 L608.36,234.90 L608.58,234.99 L608.80,235.08 L609.02,235.18 L609.24,235.27 L609.46,235.36 L609.68,235.46 L609.90,235.55 L610.12,235.65 L610.34,235.74 L610.56,235.84 L610.78,235.93 L611.00,236.03 L611.22,236.13 L611.44,236.22 L611.66,236.32 L611.88,236.42 L612.10,236.52 L612.32,236.62 L612.54,236.71 L612.76,236.81 L612.98,236.91 L613.20,237.01 L613.42,237.11 L613.64,237.21 L613.86,237.31 L614.08,237.41 L614.30,237.52 L614.52,237.62 L614.74,237.72 L614.96,237.82 L615.18,237.93 L615.40,238.03 L615.62,238.13 L615.84,238.24 L616.06,238.34 L616.28,238.44 L616.50,238.55 L616.72,238.65 L616.94,238.76 L617.16,238.87 L617.38,238.97 L617.60,239.08 L617.82,239.19 L618.04,239.29 L618.26,239.40 L618.48,239.51 L618.70,239.62 L618.92,239.72 L619.14,239.83 L619.36,239.94 L619.58,240.05 L619.80,240.16 L620.02,240.27 L620.24,240.38 L620.46,240.49 L620.68,240.61 L620.90,240.72 L621.12,240.83 L621.34,240.94 L621.56,241.05 L621.78,241.17 L622.00,241.28 L622.22,241.39 L622.44,241.51 L622.66,241.62 L622.88,241.74 L623.10,241.85 L623.32,241.97 L623.54,242.08 L623.76,242.20 L623.98,242.32 L624.20,242.43 L624.42,242.55 L624.64,242.67 L624.86,242.78 L625.08,242.90 L625.30,243.02 L625.52,243.14 L625.74,243.26 L625.96,243.38 L626.18,243.50 L626.40,243.62 L626.62,243.74 L626.84,243.86 L627.06,243.98 L627.28,244.10 L627.50,244.22 L627.72,244.35 L627.94,244.47 L628.16,244.60 L628.38,244.72 L628.60,244.85 L628.82,244.97 L629.04,245.10 L629.26,245.23 L629.48,245.35 L629.70,245.48 L629.92,245.61 L630.14,245.74 L630.36,245.87 L630.58,246.00 L630.80,246.14 L631.02,246.27 L631.24,246.40 L631.46,246.54 L631.68,246.67 L631.90,246.81 L632.12,246.95 L632.34,247.08 L632.56,247.22 L632.78,247.36 L633.00,247.50 L633.22,247.64 L633.44,247.78 L633.66,247.93 L633.88,248.07 L634.10,248.21 L634.32,248.36 L634.54,248.51 L634.76,248.65 L634.98,248.80 L635.20,248.95 L635.42,249.10 L635.64,249.25 L635.86,249.41 L636.08,249.56 L636.30,249.72 L636.52,249.87 L636.74,250.03 L636.96,250.19 L637.18,250.35 L637.40,250.51 L637.62,250.67 L637.84,250.84 L638.06,251.00 L638.28,251.17 L638.50,251.34 L638.72,251.51 L638.94,251.68 L639.16,251.86 L639.38,252.03 L639.60,252.21 L639.82,252.39 L640.04,252.56 L640.26,252.75 L640.48,252.93 L640.70,253.11 L640.92,253.30 L641.14,253.48 L641.36,253.67 L641.58,253.86 L641.80,254.05 L642.02,254.24 L642.24,254.43 L642.46,254.63 L642.68,254.82 L642.90,255.02 L643.12,255.22 L643.34,255.42 L643.56,255.62 L643.78,255.82 L644.00,256.02 L644.22,256.23 L644.44,256.43 L644.66,256.64 L644.88,256.84 L645.10,257.05 L645.32,257.26 L645.54,257.47 L645.76,257.69 L645.98,257.90 L646.20,258.11 L646.42,258.33 L646.64,258.54 L646.86,258.76 L647.08,258.98 L647.30,259.20 L647.52,259.42 L647.74,259.64 L647.96,259.86 L648.18,260.08 L648.40,260.31 L648.62,260.53 L648.84,260.76 L649.06,260.98 L649.28,261.21 L649.50,261.44 L649.72,261.67 L649.94,261.90 L650.16,262.13 L650.38,262.37 L650.60,262.60 L650.82,262.84 L651.04,263.08 L651.26,263.33 L651.48,263.57 L651.70,263.82 L651.92,264.07 L652.14,264.32 L652.36,264.58 L652.58,264.84 L652.80,265.10 L653.02,265.37 L653.24,265.64 L653.46,265.91 L653.68,266.18 L653.90,266.46 L654.12,266.75 L654.34,267.04 L654.56,267.33 L654.78,267.62 L655.00,267.92 L655.22,268.23 L655.44,268.54 L655.66,268.85 L655.88,269.17 L656.10,269.50 L656.32,269.83 L656.54,270.17 L656.76,270.51 L656.98,270.87 L657.20,271.23 L657.42,271.60 L657.64,271.97 L657.86,272.36 L658.08,272.75 L658.30,273.14 L658.52,273.55 L658.74,273.96 L658.96,274.38 L659.18,274.80 L659.40,275.24 L659.62,275.68 L659.84,276.12 L660.06,276.58 L660.28,277.04 L660.50,277.51 L660.72,277.98 L660.94,278.47 L661.16,278.96 L661.30,279.27 L661.34,279.37 L661.38,279.45 L661.39,279.47 L661.43,279.57 L661.48,279.67 L661.52,279.78 L661.56,279.88 L661.60,279.96 L661.61,279.98 L661.65,280.08 L661.70,280.18 L661.74,280.29 L661.79,280.39 L661.82,280.47 L661.83,280.49 L661.87,280.59 L661.92,280.70 L661.96,280.80 L662.01,280.91 L662.04,280.98 L662.05,281.01 L662.10,281.11 L662.14,281.22 L662.18,281.32 L662.23,281.43 L662.26,281.51 L662.27,281.54 L662.32,281.64 L662.36,281.75 L662.41,281.86 L662.45,281.96 L662.48,282.04 L662.49,282.07 L662.54,282.18 L662.58,282.29 L662.63,282.40 L662.67,282.51 L662.70,282.58 L662.71,282.62 L662.76,282.73 L662.80,282.84 L662.85,282.95 L662.89,283.06 L662.92,283.13 L662.94,283.17 L662.98,283.29 L663.02,283.40 L663.07,283.51 L663.11,283.63 L663.14,283.70 L663.16,283.74 L663.20,283.86 L663.25,283.97 L663.29,284.09 L663.33,284.21 L663.36,284.28 L663.38,284.32 L663.42,284.44 L663.47,284.56 L663.51,284.68 L663.55,284.80 L663.58,284.87 L663.60,284.92 L663.64,285.04 L663.69,285.16 L663.73,285.28 L663.78,285.40 L663.80,285.47 L663.82,285.53 L663.86,285.65 L663.91,285.78 L663.95,285.90 L664.00,286.03 L664.02,286.09 L664.04,286.15 L664.09,286.28 L664.13,286.41 L664.17,286.54 L664.22,286.67 L664.24,286.73 L664.26,286.80 L664.31,286.93 L664.35,287.06 L664.39,287.19 L664.44,287.32 L664.46,287.38 L664.48,287.46 L664.53,287.59 L664.57,287.73 L664.62,287.86 L664.66,288.00 L664.68,288.06 L664.70,288.13 L664.75,288.27 L664.79,288.41 L664.84,288.55 L664.88,288.69 L664.90,288.75 L664.93,288.83 L664.97,288.98 L665.01,289.12 L665.06,289.26 L665.10,289.41 L665.12,289.47 L665.15,289.55 L665.19,289.70 L665.24,289.85 L665.28,290.00 L665.32,290.15 L665.34,290.20 L665.37,290.30 L665.41,290.45 L665.46,290.60 L665.50,290.75 L665.54,290.91 L665.56,290.96 L665.59,291.06 L665.63,291.22 L665.68,291.37 L665.72,291.53 L665.77,291.69 L665.78,291.74 L665.81,291.85 L665.85,292.01 L665.90,292.17 L665.94,292.33 L665.99,292.50 L666.00,292.55 L666.03,292.66 L666.08,292.83 L666.12,292.99 L666.16,293.16 L666.21,293.33 L666.22,293.38 L666.25,293.51 L666.30,293.69 L666.34,293.88 L666.38,294.08 L666.43,294.29 L666.44,294.34 L666.47,294.50 L666.52,294.73 L666.56,294.95 L666.61,295.19 L666.65,295.43 L666.66,295.49 L666.69,295.68 L666.74,295.94 L666.78,296.20 L666.83,296.47 L666.87,296.74 L666.88,296.79 L666.92,297.02 L666.96,297.30 L667.00,297.58 L667.05,297.88 L667.09,298.17 L667.10,298.22 L667.14,298.47 L667.18,298.78 L667.23,299.08 L667.27,299.40 L667.31,299.71 L667.32,299.76 L667.36,300.03 L667.40,300.35 L667.45,300.67 L667.49,300.99 L667.53,301.32 L667.54,301.36 L667.58,301.65 L667.62,301.98 L667.67,302.31 L667.71,302.64 L667.76,302.98 L667.76,303.01 L667.80,303.31 L667.84,303.65 L667.89,303.98 L667.93,304.32 L667.98,304.65 L667.98,304.67 L668.02,304.98 L668.07,305.32 L668.11,305.65 L668.15,305.98 L668.20,306.31 L668.20,306.33 L668.24,306.64 L668.29,306.97 L668.33,307.29 L668.37,307.61 L668.42,307.93 L668.42,307.94 L668.46,308.25 L668.51,308.56 L668.55,308.87 L668.60,309.18 L668.64,309.48 L668.64,309.48 L668.68,309.78 L668.73,310.08 L668.77,310.37 L668.82,310.66 L668.86,310.93 L668.86,310.94 L668.91,311.21 L668.95,311.49 L668.99,311.75 L669.04,312.01 L669.08,312.25 L669.08,312.27 L669.13,312.51 L669.17,312.76 L669.22,312.99 L669.26,313.22 L669.30,313.42 L669.30,313.44 L669.35,313.65 L669.39,313.86 L669.44,314.06 L669.48,314.25 L669.52,314.41 L669.52,314.43 L669.57,314.60 L669.61,314.77 L669.66,314.92 L669.70,315.07 L669.74,315.19 L669.75,315.21 L669.79,315.34 L669.83,315.46 L669.88,315.56 L669.92,315.66 L669.96,315.74 L669.97,315.75 L670.01,315.82 L670.06,315.89 L670.10,315.94 L670.14,315.99 L670.18,316.01 L670.19,316.02 L670.23,316.04 L670.28,316.05 L670.32,316.04 L670.36,316.02 L670.40,316.00 L670.41,316.00 L670.45,315.96 L670.50,315.90 L670.54,315.84 L670.59,315.77 L670.62,315.70 L670.63,315.68 L670.67,315.59 L670.72,315.49 L670.76,315.37 L670.81,315.25 L670.84,315.15 L670.85,315.12 L670.90,314.97 L670.94,314.82 L670.98,314.66 L671.03,314.49 L671.06,314.37 L671.07,314.32 L671.12,314.13 L671.16,313.94 L671.20,313.74 L671.25,313.53 L671.28,313.38 L671.29,313.31 L671.34,313.09 L671.38,312.86 L671.43,312.62 L671.47,312.38 L671.50,312.21 L671.51,312.13 L671.56,311.88 L671.60,311.62 L671.65,311.35 L671.69,311.08 L671.72,310.90 L671.74,310.80 L671.78,310.52 L671.82,310.24 L671.87,309.95 L671.91,309.65 L671.94,309.47 L671.96,309.35 L672.00,309.05 L672.05,308.75 L672.09,308.44 L672.13,308.13 L672.16,307.94 L672.18,307.81 L672.22,307.49 L672.27,307.17 L672.31,306.85 L672.35,306.53 L672.38,306.34 L672.40,306.20 L672.44,305.88 L672.49,305.55 L672.53,305.22 L672.58,304.89 L672.60,304.71 L672.62,304.56 L672.66,304.23 L672.71,303.89 L672.75,303.56 L672.80,303.23 L672.82,303.06 L672.84,302.90 L672.89,302.57 L672.93,302.24 L672.97,301.91 L673.02,301.59 L673.04,301.43 L673.06,301.26 L673.11,300.94 L673.15,300.62 L673.19,300.30 L673.24,299.98 L673.26,299.83 L673.28,299.67 L673.33,299.36 L673.37,299.05 L673.42,298.75 L673.46,298.45 L673.48,298.31 L673.50,298.15 L673.55,297.85 L673.59,297.57 L673.64,297.28 L673.68,297.00 L673.70,296.89 L673.73,296.73 L673.77,296.46 L673.81,296.19 L673.86,295.93 L673.90,295.68 L673.92,295.58 L673.95,295.43 L673.99,295.19 L674.04,294.96 L674.08,294.73 L674.12,294.51 L674.14,294.43 L674.17,294.30 L674.21,294.09 L674.26,293.89 L674.30,293.70 L674.34,293.52 L674.36,293.46 L674.39,293.34 L674.43,293.17 L674.48,293.01 L674.52,292.84 L674.57,292.67 L674.58,292.62 L674.61,292.51 L674.65,292.34 L674.70,292.18 L674.74,292.02 L674.79,291.86 L674.80,291.81 L674.83,291.70 L674.88,291.54 L674.92,291.38 L674.96,291.22 L675.01,291.06 L675.02,291.02 L675.05,290.90 L675.10,290.75 L675.14,290.59 L675.18,290.44 L675.23,290.28 L675.24,290.24 L675.27,290.13 L675.32,289.98 L675.36,289.82 L675.41,289.67 L675.45,289.52 L675.46,289.49 L675.49,289.37 L675.54,289.23 L675.58,289.08 L675.63,288.93 L675.67,288.79 L675.68,288.76 L675.72,288.64 L675.76,288.50 L675.80,288.35 L675.85,288.21 L675.89,288.07 L675.90,288.04 L675.94,287.93 L675.98,287.78 L676.03,287.64 L676.07,287.51 L676.11,287.37 L676.12,287.35 L676.16,287.23 L676.20,287.09 L676.25,286.96 L676.29,286.82 L676.33,286.69 L676.34,286.67 L676.38,286.55 L676.42,286.42 L676.47,286.29 L676.51,286.16 L676.56,286.02 L676.56,286.01 L676.60,285.89 L676.64,285.77 L676.69,285.64 L676.73,285.51 L676.78,285.38 L676.78,285.37 L676.82,285.25 L676.87,285.13 L676.91,285.00 L676.95,284.88 L677.00,284.76 L677.00,284.75 L677.04,284.63 L677.09,284.51 L677.13,284.39 L677.17,284.27 L677.22,284.15 L677.22,284.15 L677.26,284.03 L677.31,283.91 L677.35,283.79 L677.40,283.68 L677.44,283.56 L677.44,283.56 L677.48,283.45 L677.53,283.33 L677.57,283.22 L677.62,283.10 L677.66,282.99 L677.66,282.99 L677.71,282.88 L677.75,282.77 L677.79,282.66 L677.84,282.55 L677.88,282.44 L677.88,282.44 L677.93,282.33 L677.97,282.22 L678.01,282.11 L678.06,282.01 L678.10,281.91 L678.10,281.90 L678.15,281.80 L678.19,281.69 L678.24,281.59 L678.28,281.49 L678.32,281.39 L678.32,281.38 L678.37,281.28 L678.41,281.18 L678.46,281.08 L678.50,280.98 L678.54,280.90 L678.55,280.88 L678.59,280.79 L678.63,280.69 L678.68,280.59 L678.72,280.50 L678.76,280.41 L678.77,280.40 L678.81,280.30 L678.86,280.21 L678.90,280.12 L678.94,280.02 L678.98,279.95 L679.20,279.50 L679.42,279.06 L679.64,278.64 L679.86,278.22 L680.08,277.81 L680.30,277.41 L680.52,277.02 L680.74,276.64 L680.96,276.27 L681.18,275.90 L681.40,275.54 L681.62,275.19 L681.84,274.85 L682.06,274.51 L682.28,274.18 L682.50,273.86 L682.72,273.54 L682.94,273.22 L683.16,272.92 L683.38,272.61 L683.60,272.32 L683.82,272.02 L684.04,271.74 L684.26,271.45 L684.48,271.17 L684.70,270.89 L684.92,270.62 L685.14,270.35 L685.36,270.08 L685.58,269.82 L685.80,269.55 L686.02,269.29 L686.24,269.04 L686.46,268.78 L686.68,268.53 L686.90,268.29 L687.12,268.05 L687.34,267.81 L687.56,267.57 L687.78,267.34 L688.00,267.12 L688.22,266.89 L688.44,266.67 L688.66,266.45 L688.88,266.24 L689.10,266.02 L689.32,265.81 L689.54,265.60 L689.76,265.40 L689.98,265.19 L690.20,264.99 L690.42,264.79 L690.64,264.59 L690.86,264.39 L691.08,264.19 L691.30,264.00 L691.52,263.80 L691.74,263.61 L691.96,263.41 L692.18,263.22 L692.40,263.02 L692.62,262.83 L692.84,262.63 L693.06,262.44 L693.28,262.24 L693.50,262.04 L693.72,261.85 L693.94,261.65 L694.16,261.45 L694.38,261.25 L694.60,261.06 L694.82,260.86 L695.04,260.66 L695.26,260.47 L695.48,260.27 L695.70,260.08 L695.92,259.89 L696.14,259.70 L696.36,259.51 L696.58,259.32 L696.80,259.14 L697.02,258.96 L697.24,258.77 L697.46,258.60 L697.68,258.42 L697.90,258.25 L698.12,258.08 L698.34,257.91 L698.56,257.75 L698.78,257.59 L699.00,257.43 L699.22,257.28 L699.44,257.13 L699.66,256.99 L699.88,256.85 L700.10,256.71 L700.32,256.58 L700.54,256.44 L700.76,256.31 L700.98,256.19 L701.20,256.06 L701.42,255.93 L701.64,255.81 L701.86,255.69 L702.08,255.57 L702.30,255.45 L702.52,255.33 L702.74,255.22 L702.96,255.11 L703.18,254.99 L703.40,254.88 L703.62,254.77 L703.84,254.66 L704.06,254.56 L704.28,254.45 L704.50,254.34 L704.72,254.24 L704.94,254.13 L705.16,254.03 L705.38,253.93 L705.60,253.83 L705.82,253.72 L706.04,253.62 L706.26,253.52 L706.48,253.42 L706.70,253.32 L706.92,253.22 L707.14,253.12 L707.36,253.02 L707.58,252.92 L707.80,252.82 L708.02,252.72 L708.24,252.62 L708.46,252.52 L708.68,252.42 L708.90,252.32 L709.12,252.21 L709.34,252.11 L709.56,252.01 L709.78,251.90 L710.00,251.80 L710.22,251.69 L710.44,251.59 L710.66,251.48 L710.88,251.38 L711.10,251.27 L711.32,251.16 L711.54,251.06 L711.76,250.95 L711.98,250.84 L712.20,250.73 L712.42,250.63 L712.64,250.52 L712.86,250.41 L713.08,250.30 L713.30,250.19 L713.52,250.08 L713.74,249.97 L713.96,249.87 L714.18,249.76 L714.40,249.65 L714.62,249.54 L714.84,249.43 L715.06,249.32 L715.28,249.21 L715.50,249.10 L715.72,248.99 L715.94,248.89 L716.16,248.78 L716.38,248.67 L716.60,248.56 L716.82,248.45 L717.04,248.34 L717.26,248.24 L717.48,248.13 L717.70,248.02 L717.92,247.92 L718.14,247.81 L718.36,247.70 L718.58,247.60 L718.80,247.49 L719.02,247.39 L719.24,247.28 L719.46,247.18 L719.68,247.07 L719.90,246.97 L720.12,246.87 L720.34,246.76 L720.56,246.66 L720.78,246.56 L721.00,246.46 L721.22,246.36 L721.44,246.26 L721.66,246.16 L721.88,246.06 L722.10,245.96 L722.32,245.86 L722.54,245.77 L722.76,245.67 L722.98,245.58 L723.20,245.48 L723.42,245.39 L723.64,245.29 L723.86,245.20 L724.08,245.11 L724.30,245.02 L724.52,244.93 L724.74,244.84 L724.96,244.75 L725.18,244.67 L725.40,244.58 L725.62,244.49 L725.84,244.41 L726.06,244.33 L726.28,244.24 L726.50,244.16 L726.72,244.08 L726.94,244.00 L727.16,243.92 L727.38,243.85 L727.60,243.77 L727.82,243.69 L728.04,243.62 L728.26,243.55 L728.48,243.47 L728.70,243.40 L728.92,243.33 L729.14,243.26 L729.36,243.19 L729.58,243.12 L729.80,243.05 L730.02,242.98 L730.24,242.91 L730.46,242.84 L730.68,242.77 L730.90,242.70 L731.12,242.63 L731.34,242.57 L731.56,242.50 L731.78,242.43 L732.00,242.37 L732.22,242.30 L732.44,242.23 L732.66,242.17 L732.88,242.10 L733.10,242.04 L733.32,241.97 L733.54,241.91 L733.76,241.85 L733.98,241.78 L734.20,241.72 L734.42,241.66 L734.64,241.59 L734.86,241.53 L735.08,241.47 L735.30,241.41 L735.52,241.35 L735.74,241.29 L735.96,241.23 L736.18,241.17 L736.40,241.11 L736.62,241.05 L736.84,240.99 L737.06,240.93 L737.28,240.87 L737.50,240.81 L737.72,240.75 L737.94,240.69 L738.16,240.63 L738.38,240.58 L738.60,240.52 L738.82,240.46 L739.04,240.41 L739.26,240.35 L739.48,240.29 L739.70,240.24 L739.92,240.18 L740.14,240.12 L740.36,240.07 L740.58,240.01 L740.80,239.96 L741.02,239.90 L741.24,239.85 L741.46,239.79 L741.68,239.74 L741.90,239.69 L742.12,239.63 L742.34,239.58 L742.56,239.53 L742.78,239.47 L743.00,239.42 L743.22,239.37 L743.44,239.31 L743.66,239.26 L743.88,239.21 L744.10,239.16 L744.32,239.10 L744.54,239.05 L744.76,239.00 L744.98,238.95 L745.20,238.90 L745.42,238.84 L745.64,238.79 L745.86,238.74 L746.08,238.69 L746.30,238.64 L746.52,238.59 L746.74,238.54 L746.96,238.49 L747.18,238.44 L747.40,238.39 L747.62,238.34 L747.84,238.29 L748.06,238.24 L748.28,238.19 L748.50,238.14 L748.72,238.09 L748.94,238.04 L749.16,237.99 L749.38,237.94 L749.60,237.89 L749.82,237.84 L750.04,237.79 L750.26,237.74 L750.48,237.69 L750.70,237.64 L750.92,237.59 L751.14,237.54 L751.36,237.50 L751.58,237.45 L751.80,237.40 L752.02,237.35 L752.24,237.30 L752.46,237.25 L752.68,237.20 L752.90,237.15 L753.12,237.10 L753.34,237.06 L753.56,237.01 L753.78,236.96 L754.00,236.91 L754.22,236.86 L754.44,236.81 L754.66,236.76 L754.88,236.71 L755.10,236.67 L755.32,236.62 L755.54,236.57 L755.76,236.52 L755.98,236.47 L756.20,236.42 L756.42,236.37 L756.64,236.32 L756.86,236.27 L757.08,236.23 L757.30,236.18 L757.52,236.13 L757.74,236.08 L757.96,236.03 L758.18,235.98 L758.40,235.93 L758.62,235.88 L758.84,235.83 L759.06,235.78 L759.28,235.73 L759.50,235.68 L759.72,235.63 L759.94,235.58 L760.16,235.53 L760.38,235.48 L760.60,235.43 L760.82,235.38 L761.04,235.33 L761.26,235.28 L761.48,235.23 L761.70,235.18 L761.92,235.12 L762.14,235.07 L762.36,235.02 L762.58,234.97 L762.80,234.92 L763.02,234.87 L763.24,234.81 L763.46,234.76 L763.68,234.71 L763.90,234.66 L764.12,234.61 L764.34,234.55 L764.56,234.50 L764.78,234.45 L765.00,234.40 L765.22,234.34 L765.44,234.29 L765.66,234.24 L765.88,234.19 L766.10,234.13 L766.32,234.08 L766.54,234.03 L766.76,233.98 L766.98,233.92 L767.20,233.87 L767.42,233.82 L767.64,233.77 L767.86,233.71 L768.08,233.66 L768.30,233.61 L768.52,233.56 L768.74,233.50 L768.96,233.45 L769.18,233.40 L769.40,233.35 L769.62,233.29 L769.84,233.24 L770.06,233.19 L770.28,233.14 L770.50,233.08 L770.72,233.03 L770.94,232.98 L771.16,232.92 L771.38,232.87 L771.60,232.82 L771.82,232.77 L772.04,232.71 L772.26,232.66 L772.48,232.61 L772.70,232.56 L772.92,232.50 L773.14,232.45 L773.36,232.40 L773.58,232.35 L773.80,232.30 L774.02,232.24 L774.24,232.19 L774.46,232.14 L774.68,232.09 L774.90,232.03 L775.12,231.98 L775.34,231.93 L775.56,231.88 L775.78,231.82 L776.00,231.77 L776.22,231.72 L776.44,231.67 L776.66,231.62 L776.88,231.57 L777.10,231.51 L777.32,231.46 L777.54,231.41 L777.76,231.36 L777.98,231.31 L778.20,231.25 L778.42,231.20 L778.64,231.15 L778.86,231.10 L779.08,231.05 L779.30,231.00 L779.52,230.95 L779.74,230.89 L779.96,230.84 L780.18,230.79 L780.40,230.74 L780.62,230.69 L780.84,230.64 L781.06,230.59 L781.28,230.54 L781.50,230.49 L781.72,230.44 L781.94,230.39 L782.16,230.34 L782.38,230.28 L782.60,230.23 L782.82,230.18 L783.04,230.13 L783.26,230.08 L783.48,230.03 L783.70,229.98 L783.92,229.93 L784.14,229.88 L784.36,229.83 L784.58,229.79 L784.80,229.74 L785.02,229.69 L785.24,229.64 L785.46,229.59 L785.68,229.54 L785.90,229.49 L786.12,229.44 L786.34,229.39 L786.56,229.34 L786.78,229.29 L787.00,229.25 L787.22,229.20 L787.44,229.15 L787.66,229.10 L787.88,229.05 L788.10,229.00 L788.32,228.96 L788.54,228.91 L788.76,228.86 L788.98,228.81 L789.20,228.77 L789.42,228.72 L789.64,228.67 L789.86,228.62 L790.08,228.58 L790.30,228.53 L790.52,228.48 L790.74,228.44 L790.96,228.39 L791.18,228.34 L791.40,228.30 L791.62,228.25 L791.84,228.21 L792.06,228.16 L792.28,228.11 L792.50,228.07 L792.72,228.02 L792.94,227.98 L793.16,227.93 L793.38,227.89 L793.60,227.84 L793.82,227.80 L794.04,227.75 L794.26,227.71 L794.48,227.66 L794.70,227.62 L794.92,227.58 L795.14,227.53 L795.36,227.49 L795.58,227.44 L795.80,227.40 L796.02,227.36 L796.24,227.31 L796.46,227.27 L796.68,227.23 L796.90,227.19 L797.12,227.14 L797.34,227.10 L797.56,227.06 L797.78,227.02 L798.00,226.98 L798.22,226.93 L798.44,226.89 L798.66,226.85 L798.88,226.81 L799.10,226.77 L799.32,226.73 L799.54,226.69 L799.76,226.65 L799.98,226.60 L800.20,226.56 L800.42,226.52 L800.64,226.48 L800.86,226.44 L801.08,226.40 L801.30,226.36 L801.52,226.32 L801.74,226.28 L801.96,226.24 L802.18,226.20 L802.40,226.16 L802.62,226.12 L802.84,226.08 L803.06,226.04 L803.28,226.00 L803.50,225.96 L803.72,225.92 L803.94,225.88 L804.16,225.84 L804.38,225.80 L804.60,225.76 L804.82,225.72 L805.04,225.69 L805.26,225.65 L805.48,225.61 L805.70,225.57 L805.92,225.53 L806.14,225.49 L806.36,225.45 L806.58,225.41 L806.80,225.38 L807.02,225.34 L807.24,225.30 L807.46,225.26 L807.68,225.22 L807.90,225.18 L808.12,225.15 L808.34,225.11 L808.56,225.07 L808.78,225.03 L809.00,224.99 L809.22,224.96 L809.44,224.92 L809.66,224.88 L809.88,224.84 L810.10,224.81 L810.32,224.77 L810.54,224.73 L810.76,224.69 L810.98,224.66 L811.20,224.62 L811.42,224.58 L811.64,224.55 L811.86,224.51 L812.08,224.47 L812.30,224.44 L812.52,224.40 L812.74,224.36 L812.96,224.33 L813.18,224.29 L813.40,224.25 L813.62,224.22 L813.84,224.18 L814.06,224.15 L814.28,224.11 L814.50,224.07 L814.72,224.04 L814.94,224.00 L815.16,223.97 L815.38,223.93 L815.60,223.89 L815.82,223.86 L816.04,223.82 L816.26,223.79 L816.48,223.75 L816.70,223.72 L816.92,223.68 L817.14,223.65 L817.36,223.61 L817.58,223.58 L817.80,223.54 L818.02,223.51 L818.24,223.47 L818.46,223.44 L818.68,223.40 L818.90,223.37 L819.12,223.33 L819.34,223.30 L819.56,223.27 L819.78,223.23 L820.00,223.20 L820.22,223.16 L820.44,223.13 L820.66,223.09 L820.88,223.06 L821.10,223.03 L821.32,222.99 L821.54,222.96 L821.76,222.92 L821.98,222.89 L822.20,222.86 L822.42,222.82 L822.64,222.79 L822.86,222.76 L823.08,222.72 L823.30,222.69 L823.52,222.66 L823.74,222.62 L823.96,222.59 L824.18,222.56 L824.40,222.52 L824.62,222.49 L824.84,222.46 L825.06,222.43 L825.28,222.39 L825.50,222.36 L825.72,222.33 L825.94,222.30 L826.16,222.26 L826.38,222.23 L826.60,222.20 L826.82,222.17 L827.04,222.13 L827.26,222.10 L827.48,222.07 L827.70,222.04 L827.92,222.01 L828.14,221.97 L828.36,221.94 L828.58,221.91 L828.80,221.88 L829.02,221.85 L829.24,221.81 L829.46,221.78 L829.68,221.75 L829.90,221.72 L830.12,221.69 L830.34,221.66 L830.56,221.63 L830.78,221.59 L831.00,221.56 L831.22,221.53 L831.44,221.50 L831.66,221.47 L831.88,221.44 L832.10,221.41 L832.32,221.38 L832.54,221.35 L832.76,221.32 L832.98,221.29 L833.20,221.26 L833.42,221.22 L833.64,221.19 L833.86,221.16 L834.08,221.13 L834.30,221.10 L834.52,221.07 L834.74,221.04 L834.96,221.00 L835.18,220.97 L835.40,220.94 L835.62,220.90 L835.84,220.87 L836.06,220.84 L836.28,220.80 L836.50,220.77 L836.72,220.73 L836.94,220.70 L837.16,220.66 L837.38,220.63 L837.60,220.59 L837.82,220.56 L838.04,220.52 L838.26,220.48 L838.48,220.45 L838.70,220.41 L838.92,220.38 L839.14,220.34 L839.36,220.30 L839.58,220.27 L839.80,220.23 L840.02,220.19 L840.24,220.16 L840.46,220.12 L840.68,220.09 L840.90,220.05 L841.12,220.01 L841.34,219.98 L841.56,219.94 L841.78,219.91 L842.00,219.87 L842.22,219.84 L842.44,219.80 L842.66,219.77 L842.88,219.73 L843.10,219.70 L843.32,219.66 L843.54,219.63 L843.76,219.59 L843.98,219.56 L844.20,219.53 L844.42,219.49 L844.64,219.46 L844.86,219.43 L845.08,219.40 L845.30,219.37 L845.52,219.34 L845.74,219.31 L845.96,219.28 L846.18,219.25 L846.40,219.22 L846.62,219.19 L846.84,219.16 L847.06,219.13 L847.28,219.10 L847.50,219.08 L847.72,219.05 L847.94,219.03 L848.16,219.00 L848.38,218.98 L848.60,218.95 L848.82,218.93 L849.04,218.91 L849.26,218.89 L849.48,218.86 L849.70,218.84 L849.92,218.82 L850.14,218.80 L850.36,218.79 L850.58,218.77 L850.80,218.75 L851.02,218.74 L851.24,218.72 L851.46,218.71 L851.68,218.69 L851.90,218.68 L852.12,218.67 L852.34,218.66 L852.56,218.65 L852.78,218.64 L853.00,218.63 L853.22,218.62 L853.44,218.62 L853.66,218.61 L853.88,218.61 L854.10,218.60 L854.32,218.60 L854.54,218.60 L854.76,218.60 L854.98,218.60 L855.20,218.61 L855.42,218.63 L855.64,218.65 L855.86,218.67 L856.08,218.70 L856.30,218.73 L856.52,218.76 L856.74,218.80 L856.96,218.84 L857.18,218.88 L857.40,218.93 L857.62,218.97 L857.84,219.02 L858.06,219.07 L858.28,219.12 L858.50,219.17 L858.72,219.22 L858.94,219.27 L859.16,219.32 L859.38,219.37 L859.60,219.42 L859.82,219.46 L860.04,219.51 L860.26,219.55 L860.48,219.60 L860.70,219.65 L860.92,219.69 L861.14,219.74 L861.36,219.79 L861.58,219.84 L861.80,219.89 L862.02,219.94 L862.24,219.99 L862.46,220.04 L862.68,220.09 L862.90,220.15 L863.12,220.20 L863.34,220.26 L863.56,220.31 L863.78,220.37 L864.00,220.42 L864.22,220.48 L864.44,220.54 L864.66,220.60 L864.88,220.66 L865.10,220.72 L865.32,220.78 L865.54,220.84 L865.76,220.90 L865.98,220.96 L866.20,221.02 L866.42,221.09 L866.64,221.15 L866.86,221.22 L867.08,221.28 L867.30,221.35 L867.52,221.41 L867.74,221.48 L867.96,221.55 L868.18,221.62 L868.40,221.69 L868.62,221.76 L868.84,221.83 L869.06,221.90 L869.28,221.97 L869.50,222.04" fill="none" stroke="#00ffff" stroke-width="1" shape-rendering="crispEdges"/>
<path d="M517.5,672.5 L869.5,672.5" stroke="#00ff00" stroke-width="1.6"/>
<path d="M79.5,303.3 L75.5,315.3 L83.5,315.3 Z" fill="none" stroke="#ffff00" stroke-width="1"/>
<text x="79.5" y="326.3" fill="#ffff00" class="m" text-anchor="middle" style="letter-spacing:0">1</text>
<path d="M86.5,265.4 L82.5,277.4 L90.5,277.4 Z" fill="none" stroke="#ffff00" stroke-width="1"/>
<text x="88.5" y="288.4" fill="#ffff00" class="m" text-anchor="middle" style="letter-spacing:0">2</text>
<path d="M95.5,248.7 L91.5,260.7 L99.5,260.7 Z" fill="none" stroke="#ffff00" stroke-width="1"/>
<text x="97.5" y="270.7" fill="#ffff00" class="m" text-anchor="middle" style="letter-spacing:0">3</text>
<path d="M122.5,227.6 L118.5,239.6 L126.5,239.6 Z" fill="none" stroke="#ffff00" stroke-width="1"/>
<text x="122.5" y="250.6" fill="#ffff00" class="m" text-anchor="middle" style="letter-spacing:0">4</text>
<path d="M166.5,216.6 L162.5,228.6 L170.5,228.6 Z" fill="none" stroke="#ffff00" stroke-width="1"/>
<text x="166.5" y="239.6" fill="#ffff00" class="m" text-anchor="middle" style="letter-spacing:0">5</text>
<path d="M254.5,214.2 L250.5,226.2 L258.5,226.2 Z" fill="none" stroke="#ffff00" stroke-width="1"/>
<text x="254.5" y="237.2" fill="#ffff00" class="m" text-anchor="middle" style="letter-spacing:0">6</text>
<path d="M430.5,224.5 L426.5,236.5 L434.5,236.5 Z" fill="none" stroke="#ffff00" stroke-width="1"/>
<text x="430.5" y="247.5" fill="#ffff00" class="m" text-anchor="middle" style="letter-spacing:0">7</text>
<path d="M231.5,214.2 L227.5,201.2 L235.5,201.2 Z" fill="none" stroke="#ffff00" stroke-width="1"/>
<text x="231.5" y="198.7" fill="#ffff00" class="m" text-anchor="middle" style="letter-spacing:0">8</text>
<path d="M79.5,354.5 L72.5,361.5 L86.5,361.5 Z" fill="none" stroke="#ffff00"/>
<path d="M86.5,354.5 L79.5,361.5 L93.5,361.5 Z" fill="none" stroke="#ffff00"/>
<path d="M95.5,354.5 L88.5,361.5 L102.5,361.5 Z" fill="none" stroke="#ffff00"/>
<path d="M122.5,354.5 L115.5,361.5 L129.5,361.5 Z" fill="none" stroke="#ffff00"/>
<path d="M166.5,354.5 L159.5,361.5 L173.5,361.5 Z" fill="none" stroke="#ffff00"/>
<path d="M254.5,354.5 L247.5,361.5 L261.5,361.5 Z" fill="none" stroke="#ffff00"/>
<path d="M430.5,354.5 L423.5,361.5 L437.5,361.5 Z" fill="none" stroke="#ffff00"/>
<path d="M231.5,354.5 L224.0,361.5 L239.0,361.5 Z" fill="#ffff00"/>
<path d="M71.5,205.5 L79.5,213.0 L71.5,220.5 Z" fill="#ffff00"/>
<path d="M438.5,205.5 L430.5,213.0 L438.5,220.5 Z" fill="#ffff00"/>
<text x="430" y="227.5" fill="#ffff00" class="m">1</text>
<path d="M517.5,213.6 L513.5,225.6 L521.5,225.6 Z" fill="none" stroke="#00ffff" stroke-width="1"/>
<text x="515.5" y="236.6" fill="#00ffff" class="m" text-anchor="middle" style="letter-spacing:0">1</text>
<path d="M524.5,213.9 L520.5,225.9 L528.5,225.9 Z" fill="none" stroke="#00ffff" stroke-width="1"/>
<text x="523.5" y="236.9" fill="#00ffff" class="m" text-anchor="middle" style="letter-spacing:0">2</text>
<path d="M533.5,214.6 L529.5,226.6 L537.5,226.6 Z" fill="none" stroke="#00ffff" stroke-width="1"/>
<text x="533.5" y="237.6" fill="#00ffff" class="m" text-anchor="middle" style="letter-spacing:0">3</text>
<path d="M560.5,218.8 L556.5,230.8 L564.5,230.8 Z" fill="none" stroke="#00ffff" stroke-width="1"/>
<text x="560.5" y="241.8" fill="#00ffff" class="m" text-anchor="middle" style="letter-spacing:0">4</text>
<path d="M604.5,233.5 L600.5,245.5 L608.5,245.5 Z" fill="none" stroke="#00ffff" stroke-width="1"/>
<text x="604.5" y="256.5" fill="#00ffff" class="m" text-anchor="middle" style="letter-spacing:0">5</text>
<path d="M692.5,262.4 L688.5,274.4 L696.5,274.4 Z" fill="none" stroke="#00ffff" stroke-width="1"/>
<text x="692.5" y="285.4" fill="#00ffff" class="m" text-anchor="middle" style="letter-spacing:0">6</text>
<path d="M869.5,222.0 L865.5,234.0 L873.5,234.0 Z" fill="none" stroke="#00ffff" stroke-width="1"/>
<text x="869.5" y="245.0" fill="#00ffff" class="m" text-anchor="middle" style="letter-spacing:0">7</text>
<path d="M669.5,316.0 L665.5,303.0 L673.5,303.0 Z" fill="none" stroke="#00ffff" stroke-width="1"/>
<text x="669.5" y="300.5" fill="#00ffff" class="m" text-anchor="middle" style="letter-spacing:0">8</text>
<path d="M517.5,354.5 L510.5,361.5 L524.5,361.5 Z" fill="none" stroke="#00ffff"/>
<path d="M524.5,354.5 L517.5,361.5 L531.5,361.5 Z" fill="none" stroke="#00ffff"/>
<path d="M533.5,354.5 L526.5,361.5 L540.5,361.5 Z" fill="none" stroke="#00ffff"/>
<path d="M560.5,354.5 L553.5,361.5 L567.5,361.5 Z" fill="none" stroke="#00ffff"/>
<path d="M604.5,354.5 L597.5,361.5 L611.5,361.5 Z" fill="none" stroke="#00ffff"/>
<path d="M692.5,354.5 L685.5,361.5 L699.5,361.5 Z" fill="none" stroke="#00ffff"/>
<path d="M869.5,354.5 L862.5,361.5 L876.5,361.5 Z" fill="none" stroke="#00ffff"/>
<path d="M669.5,354.5 L662.0,361.5 L677.0,361.5 Z" fill="#00ffff"/>
<path d="M509.5,205.5 L517.5,213.0 L509.5,220.5 Z" fill="#00ffff"/>
<path d="M877.5,205.5 L869.5,213.0 L877.5,220.5 Z" fill="#00ffff"/>
<text x="869" y="224.5" fill="#00ffff" class="m">2</text>
<clipPath id="c4"><rect x="400" y="600" width="480" height="84"/></clipPath>
<path d="M517.5,673.5 L510.5,680.5 L524.5,680.5 Z" fill="none" stroke="#00ff00"/>
<path d="M517.5,673.5 L513.5,684.5 L521.5,684.5 Z" fill="none" stroke="#00ff00" clip-path="url(#c4)"/>
<path d="M524.5,673.5 L517.5,680.5 L531.5,680.5 Z" fill="none" stroke="#00ff00"/>
<path d="M524.5,673.5 L520.5,684.5 L528.5,684.5 Z" fill="none" stroke="#00ff00" clip-path="url(#c4)"/>
<path d="M533.5,673.5 L526.5,680.5 L540.5,680.5 Z" fill="none" stroke="#00ff00"/>
<path d="M533.5,673.5 L529.5,684.5 L537.5,684.5 Z" fill="none" stroke="#00ff00" clip-path="url(#c4)"/>
<path d="M560.5,673.5 L553.5,680.5 L567.5,680.5 Z" fill="none" stroke="#00ff00"/>
<path d="M560.5,673.5 L556.5,684.5 L564.5,684.5 Z" fill="none" stroke="#00ff00" clip-path="url(#c4)"/>
<path d="M604.5,673.5 L597.5,680.5 L611.5,680.5 Z" fill="none" stroke="#00ff00"/>
<path d="M604.5,673.5 L600.5,684.5 L608.5,684.5 Z" fill="none" stroke="#00ff00" clip-path="url(#c4)"/>
<path d="M692.5,673.5 L685.5,680.5 L699.5,680.5 Z" fill="none" stroke="#00ff00"/>
<path d="M692.5,673.5 L688.5,684.5 L696.5,684.5 Z" fill="none" stroke="#00ff00" clip-path="url(#c4)"/>
<path d="M869.5,673.5 L862.5,680.5 L876.5,680.5 Z" fill="none" stroke="#00ff00"/>
<path d="M869.5,673.5 L865.5,684.5 L873.5,684.5 Z" fill="none" stroke="#00ff00" clip-path="url(#c4)"/>
<path d="M669.5,672.5 L665.5,660.5 L673.5,660.5 Z" fill="none" stroke="#00ff00" stroke-width="1"/>
<text x="669.5" y="656.5" fill="#00ff00" class="m" text-anchor="middle" style="letter-spacing:0">8</text>
<path d="M669.5,673.5 L662.0,680.5 L677.0,680.5 Z" fill="#00ff00"/>
<path d="M509.5,664.5 L517.5,672.5 L509.5,680.5 Z" fill="#00ff00"/>
<path d="M877.5,665.0 L869.5,672.5 L877.5,680.0 Z" fill="#00ff00"/>
<g fill="none" stroke-width="1">
<clipPath id="uc"><circle cx="222.0" cy="531.5" r="141.5"/></clipPath>
<g clip-path="url(#uc)" stroke="#505050">
<circle cx="245.58" cy="531.5" r="117.92"/>
<circle cx="269.17" cy="531.5" r="94.33"/>
<circle cx="292.75" cy="531.5" r="70.75"/>
<circle cx="316.33" cy="531.5" r="47.17"/>
<circle cx="339.92" cy="531.5" r="23.58"/>
<circle cx="363.50" cy="3.41" r="528.09"/>
<circle cx="363.50" cy="1059.59" r="528.09"/>
<circle cx="363.50" cy="286.41" r="245.09"/>
<circle cx="363.50" cy="776.59" r="245.09"/>
<circle cx="363.50" cy="390.00" r="141.50"/>
<circle cx="363.50" cy="673.00" r="141.50"/>
<circle cx="363.50" cy="449.80" r="81.70"/>
<circle cx="363.50" cy="613.20" r="81.70"/>
<circle cx="363.50" cy="493.59" r="37.91"/>
<circle cx="363.50" cy="569.41" r="37.91"/>
</g>
<circle cx="222.0" cy="531.5" r="141.5" stroke="#a8a8a8"/>
<path d="M80.5,531.5 L363.5,531.5" stroke="#a8a8a8"/>
</g>
<path d="M222.00,530.50 C222.15,530.05 222.57,529.38 222.90,527.80 C223.23,526.22 223.60,523.18 224.00,521.00 C224.40,518.82 224.70,517.20 225.30,514.70 C225.90,512.20 226.58,508.57 227.60,506.00 C228.62,503.43 229.73,502.48 231.40,499.30 C233.07,496.12 234.62,490.80 237.60,486.90 C240.58,483.00 244.32,479.35 249.30,475.90 C254.28,472.45 261.88,468.77 267.50,466.20 C273.12,463.63 278.22,461.70 283.00,460.50 C287.78,459.30 292.05,459.12 296.20,459.00 C300.35,458.88 302.67,458.75 307.90,459.80 C313.13,460.85 321.98,462.73 327.60,465.30 C333.22,467.87 337.57,471.12 341.60,475.20 C345.63,479.28 349.32,484.68 351.80,489.80 C354.28,494.92 355.38,499.45 356.50,505.90 C357.62,512.35 358.17,521.57 358.50,528.50 C358.83,535.43 358.73,542.63 358.50,547.50 C358.27,552.37 358.12,554.50 357.10,557.70 C356.08,560.90 354.10,564.97 352.40,566.70 C350.70,568.43 349.18,567.07 346.90,568.10 C344.62,569.13 341.90,571.07 338.70,572.90 C335.50,574.73 331.13,577.38 327.70,579.10 C324.27,580.82 321.77,581.95 318.10,583.20 C314.43,584.45 309.37,586.27 305.70,586.60 C302.03,586.93 298.62,585.77 296.10,585.20 C293.58,584.63 292.25,584.22 290.60,583.20 C288.95,582.18 286.80,580.37 286.20,579.10 C285.60,577.83 286.03,576.30 287.00,575.60 C287.97,574.90 290.60,574.32 292.00,574.90 C293.40,575.48 295.07,577.48 295.40,579.10 C295.73,580.72 294.23,583.68 294.00,584.60" fill="none" stroke="#ff00ff" stroke-width="1.2"/>
<path d="M222.9,527.8 L218.9,539.8 L226.9,539.8 Z" fill="none" stroke="#ff00ff" stroke-width="1"/>
<text x="222.9" y="550.8" fill="#ff00ff" class="m" text-anchor="middle" style="letter-spacing:0">1</text>
<path d="M225.3,514.7 L221.3,526.7 L229.3,526.7 Z" fill="none" stroke="#ff00ff" stroke-width="1"/>
<text x="225.8" y="537.2" fill="#ff00ff" class="m" text-anchor="middle" style="letter-spacing:0">2</text>
<path d="M231.4,499.3 L227.4,511.3 L235.4,511.3 Z" fill="none" stroke="#ff00ff" stroke-width="1"/>
<text x="232.4" y="521.8" fill="#ff00ff" class="m" text-anchor="middle" style="letter-spacing:0">3</text>
<path d="M267.5,466.2 L263.5,478.2 L271.5,478.2 Z" fill="none" stroke="#ff00ff" stroke-width="1"/>
<text x="267.5" y="488.2" fill="#ff00ff" class="m" text-anchor="middle" style="letter-spacing:0">4</text>
<path d="M327.6,465.3 L323.6,477.3 L331.6,477.3 Z" fill="none" stroke="#ff00ff" stroke-width="1"/>
<text x="327.6" y="487.3" fill="#ff00ff" class="m" text-anchor="middle" style="letter-spacing:0">5</text>
<path d="M357.1,557.7 L353.1,569.7 L361.1,569.7 Z" fill="none" stroke="#ff00ff" stroke-width="1"/>
<text x="357.1" y="580.7" fill="#ff00ff" class="m" text-anchor="middle" style="letter-spacing:0">6</text>
<path d="M293.8,586.1 L289.8,598.1 L297.8,598.1 Z" fill="none" stroke="#ff00ff" stroke-width="1"/>
<text x="293.8" y="609.1" fill="#ff00ff" class="m" text-anchor="middle" style="letter-spacing:0">7</text>
<path d="M358.5,528.5 L354.5,518.5 L362.5,518.5 Z" fill="none" stroke="#ff00ff" stroke-width="1"/>
<text x="358.5" y="515.5" fill="#ff00ff" class="m" text-anchor="middle" style="letter-spacing:0">8</text>
<rect x="357" y="527" width="3" height="3" fill="#ff00ff"/>
<path d="M16.5,673.0 L9.5,681.0 L23.5,681.0 Z" fill="none" stroke="#ff00ff"/>
<path d="M24.5,673.0 L17.5,681.0 L31.5,681.0 Z" fill="none" stroke="#ff00ff"/>
<path d="M34.5,673.0 L27.5,681.0 L41.5,681.0 Z" fill="none" stroke="#ff00ff"/>
<path d="M65.5,673.0 L58.5,681.0 L72.5,681.0 Z" fill="none" stroke="#ff00ff"/>
<path d="M117.5,673.0 L110.5,681.0 L124.5,681.0 Z" fill="none" stroke="#ff00ff"/>
<path d="M221.5,673.0 L214.5,681.0 L228.5,681.0 Z" fill="none" stroke="#ff00ff"/>
<path d="M430.5,673.0 L423.5,681.0 L437.5,681.0 Z" fill="none" stroke="#ff00ff"/>
<path d="M195.5,673.0 L188.0,681.0 L203.0,681.0 Z" fill="#ff00ff"/>
<rect x="881" y="41" width="143" height="2" fill="#ececec"/>
<rect x="881" y="43" width="2" height="660" fill="#ececec"/>
<rect x="883" y="43" width="2" height="660" fill="#a0a0a0"/>
<rect x="885" y="43" width="139" height="660" fill="#000000"/>
<rect x="886" y="44" width="137" height="33" fill="#34345f"/>
<rect x="886" y="44" width="137" height="1" fill="#8a8ac0"/>
<rect x="886" y="44" width="1" height="33" fill="#8a8ac0"/>
<rect x="886" y="75" width="137" height="2" fill="#000030"/>
<text x="955" y="65" fill="#ffffff" font-family="'Liberation Sans', sans-serif" font-size="12" textLength="21.5" lengthAdjust="spacingAndGlyphs" text-anchor="middle" >S2P</text>
<rect x="886" y="78" width="137" height="34" fill="#6a6a6a"/>
<rect x="886" y="78" width="136" height="33" fill="#ffffff"/>
<rect x="887" y="79" width="135" height="32" fill="#6a6a6a"/>
<rect x="887" y="79" width="134" height="31" fill="#b4b4b4"/>
<text x="955" y="100.0" fill="#000" font-family="'Liberation Sans', sans-serif" font-size="12" textLength="48" lengthAdjust="spacingAndGlyphs" text-anchor="middle" >[ 1-2 ]...</text>
<rect x="886" y="113" width="137" height="34" fill="#6a6a6a"/>
<rect x="886" y="113" width="136" height="33" fill="#ffffff"/>
<rect x="887" y="114" width="135" height="32" fill="#6a6a6a"/>
<rect x="887" y="114" width="134" height="31" fill="#b4b4b4"/>
<text x="955" y="135.0" fill="#000" font-family="'Liberation Sans', sans-serif" font-size="12" textLength="48" lengthAdjust="spacingAndGlyphs" text-anchor="middle" >[ 1-3 ]...</text>
<rect x="886" y="148" width="137" height="34" fill="#6a6a6a"/>
<rect x="886" y="148" width="136" height="33" fill="#ffffff"/>
<rect x="887" y="149" width="135" height="32" fill="#6a6a6a"/>
<rect x="887" y="149" width="134" height="31" fill="#b4b4b4"/>
<text x="955" y="170.0" fill="#000" font-family="'Liberation Sans', sans-serif" font-size="12" textLength="48" lengthAdjust="spacingAndGlyphs" text-anchor="middle" >[ 1-4 ]...</text>
<rect x="886" y="183" width="137" height="34" fill="#6a6a6a"/>
<rect x="886" y="183" width="136" height="33" fill="#ffffff"/>
<rect x="887" y="184" width="135" height="32" fill="#6a6a6a"/>
<rect x="887" y="184" width="134" height="31" fill="#b4b4b4"/>
<text x="955" y="205.0" fill="#000" font-family="'Liberation Sans', sans-serif" font-size="12" textLength="48" lengthAdjust="spacingAndGlyphs" text-anchor="middle" >[ 2-3 ]...</text>
<rect x="886" y="218" width="137" height="34" fill="#6a6a6a"/>
<rect x="886" y="218" width="136" height="33" fill="#ffffff"/>
<rect x="887" y="219" width="135" height="32" fill="#6a6a6a"/>
<rect x="887" y="219" width="134" height="31" fill="#b4b4b4"/>
<text x="955" y="240.0" fill="#000" font-family="'Liberation Sans', sans-serif" font-size="12" textLength="48" lengthAdjust="spacingAndGlyphs" text-anchor="middle" >[ 2-4 ]...</text>
<rect x="886" y="253" width="137" height="33" fill="#2a2a2a"/>
<rect x="886" y="253" width="136" height="32" fill="#707070"/>
<rect x="887" y="254" width="135" height="31" fill="#2a2a2a"/>
<rect x="887" y="254" width="134" height="30" fill="#4a4a4a"/>
<text x="955" y="274.5" fill="#ffffff" font-family="'Liberation Sans', sans-serif" font-size="12" textLength="48" lengthAdjust="spacingAndGlyphs" text-anchor="middle" >[ 3-4 ]...</text>
<rect x="886" y="286" width="137" height="1" fill="#000030"/>
<rect x="886" y="287" width="137" height="2" fill="#7a7ab8"/>
<rect x="886" y="289" width="137" height="1" fill="#000030"/>
<rect x="886" y="289" width="137" height="33" fill="#6a6a6a"/>
<rect x="886" y="289" width="136" height="32" fill="#ffffff"/>
<rect x="887" y="290" width="135" height="31" fill="#6a6a6a"/>
<rect x="887" y="290" width="134" height="30" fill="#b4b4b4"/>
<text x="955" y="310.5" fill="#000" font-family="'Liberation Sans', sans-serif" font-size="12" textLength="37" lengthAdjust="spacingAndGlyphs" text-anchor="middle" >Return</text>
<rect x="886" y="323" width="137" height="380" fill="#8a8a8a"/>
<rect x="886" y="323" width="136" height="379" fill="#2e2e2e"/>
<rect x="887" y="324" width="135" height="378" fill="#4f4f4f"/>
<rect x="0" y="684" width="885" height="1" fill="#e8e8e8"/>
<rect x="0" y="685" width="885" height="19" fill="#b9b9b9"/>
<rect x="2" y="686" width="16" height="16" fill="#8a8a8a"/>
<rect x="3" y="687" width="15" height="15" fill="#ffffff"/>
<rect x="3" y="687" width="14" height="14" fill="#d6d6d6"/>
<text x="6" y="699" fill="#000" font-family="'Liberation Sans', sans-serif" font-size="12" >1</text>
<text x="21" y="699" fill="#000" font-family="'Liberation Sans', sans-serif" font-size="12" textLength="71" lengthAdjust="spacingAndGlyphs" >Start 50 MHz</text>
<text x="372.5" y="699" fill="#000" font-family="'Liberation Sans', sans-serif" font-size="12" textLength="69" lengthAdjust="spacingAndGlyphs" >IFBW 70 kHz</text>
<text x="722" y="699" fill="#000" font-family="'Liberation Sans', sans-serif" font-size="12" textLength="69" lengthAdjust="spacingAndGlyphs" >Stop 20 GHz</text>
<rect x="797" y="686" width="46" height="16" fill="#404088"/>
<text x="802" y="699" fill="#fff" font-family="'Liberation Sans', sans-serif" font-size="12" textLength="36" lengthAdjust="spacingAndGlyphs" >16/16</text>
<rect x="844" y="686" width="26" height="16" fill="#404088"/>
<text x="848" y="699" fill="#fff" font-family="'Liberation Sans', sans-serif" font-size="12" textLength="19" lengthAdjust="spacingAndGlyphs" >Cor</text>
<rect x="871" y="686" width="12" height="16" fill="#e4e4e4"/>
<rect x="871" y="686" width="11" height="15" fill="#8a8a8a"/>
<rect x="872" y="687" width="10" height="14" fill="#d0d0d0"/>
<rect x="883" y="684" width="2" height="20" fill="#c8c8c8"/>
<rect x="0" y="704" width="1024" height="1" fill="#000000"/>
<rect x="885" y="703" width="139" height="1" fill="#000000"/>
<rect x="0" y="705" width="1024" height="23" fill="#505050"/>
<rect x="0" y="725" width="1024" height="3" fill="#202020"/>
<rect x="704" y="707" width="47" height="18" fill="#3a3a3a"/>
<rect x="705" y="708" width="46" height="17" fill="#8a8a8a"/>
<rect x="705" y="708" width="45" height="16" fill="#40408a"/>
<text x="711" y="722" fill="#ffffff" font-family="'Liberation Sans', sans-serif" font-size="17" textLength="33.5" lengthAdjust="spacingAndGlyphs" >Hold</text>
<rect x="752" y="707" width="40" height="18" fill="#3a3a3a"/>
<rect x="753" y="708" width="39" height="17" fill="#8a8a8a"/>
<rect x="753" y="708" width="38" height="16" fill="#505050"/>
<text x="756" y="722" fill="#8a8a8a" font-family="'Liberation Sans', sans-serif" font-size="17" textLength="32" lengthAdjust="spacingAndGlyphs" >Stop</text>
<rect x="793" y="707" width="54" height="18" fill="#3a3a3a"/>
<rect x="794" y="708" width="53" height="17" fill="#8a8a8a"/>
<rect x="794" y="708" width="52" height="16" fill="#505050"/>
<text x="796" y="722" fill="#8a8a8a" font-family="'Liberation Sans', sans-serif" font-size="17" textLength="48" lengthAdjust="spacingAndGlyphs" >ExtRef</text>
<rect x="848" y="707" width="32" height="18" fill="#3a3a3a"/>
<rect x="849" y="708" width="31" height="17" fill="#8a8a8a"/>
<rect x="849" y="708" width="30" height="16" fill="#505050"/>
<text x="851" y="722" fill="#8a8a8a" font-family="'Liberation Sans', sans-serif" font-size="17" textLength="27" lengthAdjust="spacingAndGlyphs" >Svc</text>
<rect x="881" y="707" width="139" height="18" fill="#3a3a3a"/>
<rect x="882" y="708" width="138" height="17" fill="#8a8a8a"/>
<rect x="882" y="708" width="137" height="16" fill="#404040"/>
<text x="885" y="722" fill="#ffffff" font-family="'Liberation Sans', sans-serif" font-size="17" textLength="131.5" lengthAdjust="spacingAndGlyphs" >2022-01-13 15:18</text>
</svg>
</body></html>
